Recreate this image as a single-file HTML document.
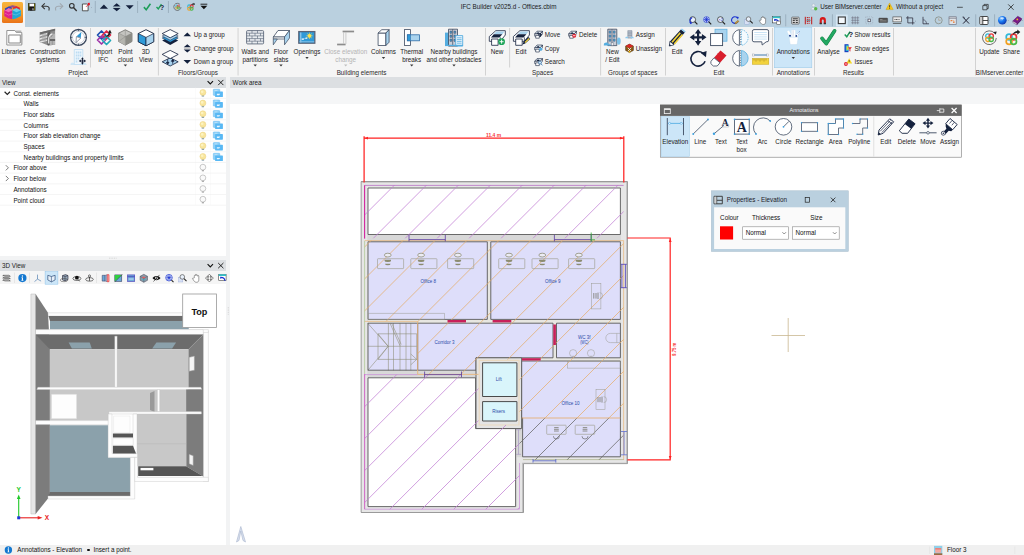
<!DOCTYPE html>
<html><head><meta charset="utf-8"><title>IFC Builder v2025.d - Offices.cbim</title>
<style>
html,body{margin:0;padding:0;}
body{width:1024px;height:555px;overflow:hidden;position:relative;background:#fff;font-family:"Liberation Sans",sans-serif;font-size:6.3px;color:#222;line-height:1;}
.a{position:absolute;}
.t{position:absolute;white-space:nowrap;}
.c{position:absolute;white-space:nowrap;text-align:center;transform:translateX(-50%);}
svg{position:absolute;overflow:visible;}
#title{left:0;top:0;width:1024px;height:26.5px;background:#bad0df;}
#ribbon{left:0;top:26.5px;width:1024px;height:50.5px;background:#f5f5f5;}
.sep{position:absolute;width:1px;background:#d0d0d0;top:28px;height:47px;}
.gl{position:absolute;top:70.4px;white-space:nowrap;transform:translateX(-50%);color:#2a2a2a;}
.dis{color:#b4b4b4;}
.hdr{position:absolute;background:#dcdfe2;height:11px;}
.hdr span{position:absolute;top:2.2px;}
.row{position:absolute;left:0;width:226px;height:10.67px;border-bottom:0.5px solid #ececec;box-sizing:border-box;}
.row span{position:absolute;top:2.4px;color:#111;}
</style></head><body>

<!-- title bar -->
<div id="title" class="a"></div>
<div class="a" style="left:0;top:0;width:24.7px;height:26.5px;background:#f5f5f5;"></div>
<div class="a" style="left:1.6px;top:1.9px;width:21.3px;height:21.2px;border-radius:1.5px;background:linear-gradient(#f8b53c,#f29a2a 55%,#ea7318);"></div>
<svg class="a" style="left:0;top:0;" width="1024" height="27" viewBox="0 0 1024 27">
<g transform="translate(0 0) scale(1)"><path d="M4.300 10.200l4.300-2.100 3.800 2.100v9.100l-4.300-1-3.800-2.200z" fill="#e0208c"/><path d="M12.400 10.200l4.200-2.100 4.300 2.100v5.900l-4.800 2.400-3.700.8z" fill="#20a8d8"/><path d="M4.300 10.200l4.300-2.100 3.800 2.100-3.900 2z" fill="#f268b4"/><path d="M12.400 10.200l4.200-2.100 4.300 2.100-4.400 2z" fill="#6cd0ee"/><path d="M4.800 8.600l4.300-2.400 2.700 1.300v1.600L8.600 8.100l-3.200 2.100z" fill="#3048b8"/><path d="M12.900 7.500l3.200-1.600 3.800 1.800v2l-3.300-1.600-3.700 1z" fill="#e02838"/><path d="M9.100 6.200l3.300-1 3.700.7-3.200 1.600-1.100.0z" fill="#7838a8" opacity="0.800"/><path d="M5 13.200l3.500 1.900 3.900-1.500M12.400 14l3.700 1 4.200-2" fill="none" stroke="#fff" stroke-width="0.500" opacity="0.450"/></g>
<g transform="translate(28 3.2) scale(1)"><path d="M0 0h7.400v7.400H0z" fill="#111"/><path d="M1.300.4h4.800v2.800H1.300z" fill="#fff"/><path d="M.4.400h.9v6.600H.4zM6.100.4H7v6.600h-.9z" fill="#6b6b10"/><path d="M1.800 4.600h3.800v2.800H1.800z" fill="#222"/><path d="M4.600 5h.8v2h-.8z" fill="#fff"/></g>
<g transform="translate(41.5 3) scale(1)"><path d="M3.300.3L.4 3.200l2.900 2.900" fill="none" stroke="#333" stroke-width="1.100"/><path d="M.8 3.200h4.200c2.500 0 3.300 2 2.300 4.300" fill="none" stroke="#333" stroke-width="1.100"/></g>
<g transform="translate(55 3) scale(1)"><path d="M4.900.3l2.900 2.900-2.900 2.900" fill="none" stroke="#a0a8b0" stroke-width="1.100"/><path d="M7.400 3.200H3.200C.7 3.200-.1 5.200.9 7.500" fill="none" stroke="#a0a8b0" stroke-width="1.100"/></g>
<g transform="translate(68.8 2.8) scale(1)"><circle cx="3" cy="3" r="2.300" fill="none" stroke="#333" stroke-width="1.100"/><path d="M4.700 4.700l3.200 3.500" stroke="#333" stroke-width="1.300"/></g>
<g transform="translate(82 2.6) scale(1)"><path d="M.4 1.400h4.300l1.400 1.400v5.400H.4z" fill="#fff" stroke="#333" stroke-width="0.800"/><path d="M5.500.3l2.200-.1.200 2.300-1.600.6z" fill="#e81020"/><path d="M5.700 2.500L4 4.300" stroke="#e81020" stroke-width="0.700"/></g>
<circle cx="91.700" cy="7.500" r="0.300" fill="#556"/>
<rect x="94.85000000000001" y="1" width="0.700" height="12" fill="#8fa3b3"/>
<rect x="137.35" y="1" width="0.700" height="12" fill="#8fa3b3"/>
<rect x="167.95000000000002" y="1" width="0.700" height="12" fill="#8fa3b3"/>
<path d="M99.800 8.700l4.100-4.100 4.100 4.100z" fill="#14213d"/>
<path d="M112.800 6.400l3.900-3.200 3.900 3.200zM112.800 8l3.900 3.200 3.900-3.200z" fill="#14213d"/><path d="M113 7.200h7.400" stroke="#9aa" stroke-width="0.500"/>
<path d="M125.700 5.200l4 4 4-4z" fill="#14213d"/>
<g transform="translate(143 3) scale(1)"><path d="M.3 4.800l1.200-1.200 1.600 1.800L6.800.2l1.300 1L3.300 8z" fill="#1e9e5a"/></g>
<g transform="translate(155.7 3.6) scale(1)"><path d="M.3 3.800l1-1 1.200 1.400L5.200.2l1.100.8L2.700 6.500z" fill="#1e9e5a"/><text x="4.300" y="6.600" font-family="Liberation Sans, sans-serif" font-weight="bold" font-size="6.800" fill="#14213d">?</text></g>
<g transform="translate(173.6 3) scale(1)"><path d="M6.500 1.500A3.600 3.600 0 1 0 7.400 4" fill="none" stroke="#444" stroke-width="0.600"/><g fill="none" stroke-width="0.900"><circle cx="3.200" cy="3.200" r="1.100" stroke="#30b8d8"/><circle cx="4.800" cy="3.200" r="1.100" stroke="#e83838"/><circle cx="3.200" cy="4.800" r="1.100" stroke="#f0a020"/><circle cx="4.800" cy="4.800" r="1.100" stroke="#48b848"/></g></g>
<g transform="translate(186.6 2.6) scale(1)"><g fill="none" stroke-width="1.100"><circle cx="2.600" cy="3.800" r="1.500" stroke="#30b8d8"/><circle cx="5" cy="3.800" r="1.500" stroke="#e83838"/><circle cx="2.600" cy="6.200" r="1.500" stroke="#f0a020"/><circle cx="5" cy="6.200" r="1.500" stroke="#48b848"/></g><path d="M4.500 2.800C5 1.300 6 1 7 1V.2l1.500 1.300L7 2.800V2c-.8 0-1.600.1-2.500.8z" fill="#222"/></g>
<path d="M200.500 4.200h6.800" stroke="#111" stroke-width="0.900"/><path d="M200.500 5.800l3.400 3.400 3.400-3.400z" fill="#111"/>
<g transform="translate(810.7 3.3) scale(1)"><circle cx="2.800" cy="2" r="1.500" fill="#e8eef4" stroke="#98a8b8" stroke-width="0.400"/><path d="M.3 6.500c0-3 5-3 5 0z" fill="#e8eef4" stroke="#98a8b8" stroke-width="0.400"/><circle cx="5" cy="5.400" r="1.700" fill="#58b848"/></g>
<g transform="translate(885.8 2.6) scale(1)"><path d="M3.800.3l3.600 6.700H.2z" fill="#f8c818" stroke="#c89808" stroke-width="0.400" stroke-linejoin="round"/><path d="M3.800 2.600v2.300M3.800 5.600v.7" stroke="#222" stroke-width="0.800"/></g>
<path d="M957 7.300h5.800" stroke="#222" stroke-width="0.700"/>
<path d="M982.800 5.600h4.200v4.200h-4.200zM984 5.600V4.400h4.200v4.200H987" fill="none" stroke="#222" stroke-width="0.700"/>
<path d="M1008.200 4.400l5.400 5.400M1013.600 4.400l-5.400 5.400" stroke="#222" stroke-width="0.800"/>
<g transform="translate(689.2 16.1) scale(1)"><circle cx="3.500" cy="3.500" r="2.900" fill="#e8f0fa" stroke="#222" stroke-width="0.700"/><path d="M1.500 7.500C.2 5.500.5 2.500 3 1.300" fill="none" stroke="#1830d0" stroke-width="1.100"/><path d="M.3 6l1.400 2.200L3.300 6.300z" fill="#1830d0"/><path d="M5.600 5.600l2.600 2.600" stroke="#222" stroke-width="1.200"/></g>
<g transform="translate(703 16.1) scale(1)"><circle cx="3.500" cy="3.500" r="2.900" fill="#e8f0fa" stroke="#1830d0" stroke-width="0.700"/><path d="M3.500 1v5M1 3.500h5M1.700 1.700l3.600 3.600M5.300 1.700L1.700 5.300" stroke="#1830d0" stroke-width="0.800"/><path d="M5.600 5.600l2.600 2.600" stroke="#222" stroke-width="1.200"/></g>
<g transform="translate(716.9 16.1) scale(1)"><circle cx="3.500" cy="3.500" r="2.900" fill="#e8f0fa" stroke="#222" stroke-width="0.700"/><text x="1.700" y="5" font-family="Liberation Sans, sans-serif" font-size="3.600" fill="#1830d0">×2</text><path d="M5.600 5.600l2.600 2.600" stroke="#222" stroke-width="1.200"/></g>
<g transform="translate(730.7 16.1) scale(1)"><path d="M6.800 2A3.300 3.300 0 1 0 7.200 5.200" fill="none" stroke="#1830d0" stroke-width="1.100"/><path d="M5.500.3l2.600.5-.9 2.500z" fill="#1830d0"/><path d="M4.500 6.500l2.800-2.300 1 1.100-2.800 2.300-1.400.3z" fill="#c89838" stroke="#6a4a10" stroke-width="0.300"/></g>
<g transform="translate(744.5 16.1) scale(1)"><rect x="0.300" y="3.500" width="4.200" height="4.600" fill="#d8e0f4" stroke="#98a8d8" stroke-width="0.400"/><circle cx="4" cy="3" r="2.300" fill="#e8f0fa" stroke="#555" stroke-width="0.700"/><path d="M5.700 4.700l2.500 2.600" stroke="#222" stroke-width="1.100"/></g>
<g transform="translate(758.8 16.1) scale(1)"><path d="M2.300 4V1.800a.6.600 0 0 1 1.100 0V1a.6.600 0 0 1 1.200 0v.5a.6.600 0 0 1 1.100 0v.8a.55.55 0 0 1 1.100 0V6c0 1.500-.8 2.400-2.300 2.400S2.300 7.500 1.500 6.300L.6 4.800c-.3-.6.500-1 .9-.5z" fill="#fff" stroke="#444" stroke-width="0.500"/></g>
<g transform="translate(772.3 16.1) scale(1)"><rect x="0.400" y="0.400" width="7.400" height="6.400" fill="#fff" stroke="#444" stroke-width="0.600"/><rect x="0.400" y="0.400" width="7.400" height="1.700" fill="#30c0c8"/><path d="M2.500 3.500c2.500 0 4 1 4.200 3.500" fill="none" stroke="#1830d0" stroke-width="1.100"/><path d="M2 2.600l-.3 2.200 2-.6z" fill="#1830d0"/><rect x="4.500" y="5" width="3.600" height="3.200" fill="#fff" stroke="#444" stroke-width="0.500"/></g>
<rect x="785.4499999999999" y="14.300" width="0.700" height="12" fill="#8fa3b3"/>
<rect x="831.9499999999999" y="14.300" width="0.700" height="12" fill="#8fa3b3"/>
<rect x="975.4499999999999" y="14.300" width="0.700" height="12" fill="#8fa3b3"/>
<rect x="994.35" y="14.300" width="0.700" height="12" fill="#8fa3b3"/>
<g transform="translate(791.3 16.3) scale(1)"><rect x="0.300" y="0.800" width="7.600" height="7" rx="0.800" fill="#d8d8d8" stroke="#444" stroke-width="0.600"/><path d="M1.500 2.500h5M1.500 4.300h2M4.500 4.300h2M1.500 6.200h2M4.500 6.200h2" stroke="#222" stroke-width="0.900"/></g>
<g transform="translate(804.5 16.3) scale(1)"><path d="M.8.500v7.500M7.200.500v7.500" stroke="#c01818" stroke-width="1"/><path d="M2.300 1.200h3.400M2.300 3h3.400M2.300 5.200h3.400M2.300 7h3.400" stroke="#c01818" stroke-width="0.900" stroke-dasharray="1.200 0.500"/><path d="M2 4.100h4" stroke="#333" stroke-width="0.500"/></g>
<g transform="translate(818.8 16.5) scale(1)"><path d="M.9 7.500V3.700a3.100 3.100 0 0 1 6.200 0V7.500H5V3.900a1 1 0 0 0-2 0V7.500z" fill="#d81818"/><path d="M.9 6.300h2.100v1.400H.9zM5 6.300h2.100v1.400H5z" fill="#333"/></g>
<rect x="836" y="14.600" width="11.700" height="11.700" fill="#d4e6f4"/>
<rect x="838.300" y="17.0" width="7" height="6.600" fill="#f4f8fc" stroke="#333" stroke-width="1.100"/>
<g transform="translate(851.2 16.3) scale(1)"><path d="M0 1.500h8M0 4h8M0 6.500h8M1.500 0v8M4 0v8M6.500 0v8" stroke="#667" stroke-width="0.550"/></g>
<g transform="translate(865.2 16.3) scale(1)"><rect x="2.800" y="2.800" width="2.600" height="2.600" fill="#fff" stroke="#445" stroke-width="0.700"/><path d="M.5.500h7v7h-7z" fill="none" stroke="#889" stroke-width="0.500" stroke-dasharray="0.600 1.200"/></g>
<g transform="translate(878.5 17.3) scale(1)"><rect x="0.300" y="0.800" width="8.800" height="4.400" rx="0.600" fill="#555" stroke="#333" stroke-width="0.400"/><path d="M1.500 2.200h2.500M1.500 3.600h6.500" stroke="#aaa" stroke-width="0.600"/></g>
<g transform="translate(892.5 16.3) scale(1)"><rect x="0.400" y="0.600" width="8.400" height="5" fill="#e8e8e8" stroke="#444" stroke-width="0.600"/><path d="M2 3.200h5" stroke="#555" stroke-width="1.100" stroke-dasharray="1 0.500"/><path d="M.4 7.200h8.400" stroke="#444" stroke-width="0.700"/></g>
<g transform="translate(906 16.1) scale(1)"><path d="M1.800 0v6.800h6.700M0 1.800h6.700v6.700" fill="none" stroke="#334" stroke-width="0.800"/><circle cx="9.300" cy="5" r="0.300" fill="#334"/></g>
<g transform="translate(921 16.3) scale(1)"><path d="M2 .5v7h6" fill="none" stroke="#334" stroke-width="0.800"/><path d="M2 3.500c2 0 3.500 1.500 3.500 4" fill="none" stroke="#334" stroke-width="0.600"/></g>
<g transform="translate(934.7 16.3) scale(1)"><circle cx="4" cy="4" r="3.500" fill="none" stroke="#776" stroke-width="0.600"/><path d="M4 4V2M4 4h2" stroke="#a86" stroke-width="0.500"/></g>
<g transform="translate(948.6 16.0) scale(1)"><rect x="0.400" y="0.800" width="7.200" height="7.600" fill="#dfe4e8" stroke="#667" stroke-width="0.600"/><path d="M.4 2.200h7.200" stroke="#667" stroke-width="0.700"/><path d="M2 4h1.300v1.300H2zM4.600 5.600h1.300v1.300H4.600z" fill="#e87830"/><path d="M3.300 4.600h2v1" fill="none" stroke="#e87830" stroke-width="0.400"/></g>
<g transform="translate(962.1 16.3) scale(1)"><path d="M1 1l6 6.300M7.200.8L1 7.300" stroke="#223" stroke-width="1"/><path d="M.5.500l1.500.3.300 1.500" fill="none" stroke="#223" stroke-width="0.600"/></g>
<g transform="translate(979.4 16.1) scale(1)"><rect x="0.400" y="0.400" width="8.200" height="8" rx="0.800" fill="#fff" stroke="#333" stroke-width="0.900"/><rect x="0.800" y="0.800" width="2.400" height="7.200" fill="#ccc"/><path d="M3.400.4v8M3.400 4.400h5.200" stroke="#333" stroke-width="0.900"/></g>
<circle cx="989.600" cy="20.300" r="0.250" fill="#333"/>
<defs><radialGradient id="gl" cx="0.350" cy="0.300" r="0.800"><stop offset="0" stop-color="#8fc8ff"/><stop offset="0.450" stop-color="#1878f0"/><stop offset="1" stop-color="#0a2aa0"/></radialGradient></defs>
<circle cx="1002.300" cy="20.3" r="4.300" fill="url(#gl)"/><path d="M1000 18c1.500-1 3.500-.8 4.500.5-.8 0-1.500.5-1.800 1.300-.8-.8-2-.9-2.700-1.800z" fill="#e8f4ff" opacity="0.800"/>
<circle cx="1008.200" cy="20.300" r="0.250" fill="#333"/>
<g transform="translate(1012.5 15.8) scale(1)"><path d="M.3 5.300L5.200.4l4 2.400-4.800 5z" fill="#7a1888" stroke="#4a0858" stroke-width="0.400" stroke-linejoin="round"/><path d="M.3 5.300l4.100 2.500v1.300L.3 6.600z" fill="#eee" stroke="#4a0858" stroke-width="0.400"/><path d="M4.400 7.800l4.800-5v1.300l-4.800 5z" fill="#5a1068"/><circle cx="4.800" cy="3.600" r="0.900" fill="#f0c020"/></g>
<circle cx="1022.600" cy="20.300" r="0.250" fill="#333"/>
</svg>
<div class="c" style="left:508.600px;top:3.900px;color:#1a1a1a;">IFC Builder v2025.d - Offices.cbim</div>
<div class="t" style="left:820.300px;top:3.900px;color:#1a1a1a;letter-spacing:-0.070px;">User BIMserver.center</div>
<div class="t" style="left:895.900px;top:3.900px;color:#1a1a1a;">Without a project</div>
<!-- ribbon -->
<div id="ribbon" class="a"></div>
<svg class="a" style="left:0;top:0;" width="1024" height="78" viewBox="0 0 1024 78">
<rect x="157.9" y="28" width="0.9" height="47.5" fill="#cfcfcf"/>
<rect x="237.6" y="28" width="0.9" height="47.5" fill="#cfcfcf"/>
<rect x="485.0" y="28" width="0.9" height="47.5" fill="#cfcfcf"/>
<rect x="600.2" y="28" width="0.9" height="47.5" fill="#cfcfcf"/>
<rect x="665.0" y="28" width="0.9" height="47.5" fill="#cfcfcf"/>
<rect x="772.0" y="28" width="0.9" height="47.5" fill="#cfcfcf"/>
<rect x="814.1" y="28" width="0.9" height="47.5" fill="#cfcfcf"/>
<rect x="893.0" y="28" width="0.9" height="47.5" fill="#cfcfcf"/>
<rect x="975.0" y="28" width="0.9" height="47.5" fill="#cfcfcf"/>
<rect x="90.1" y="28" width="0.9" height="39.5" fill="#cfcfcf"/>
<rect x="509.20000000000005" y="28" width="0.9" height="39.5" fill="#cfcfcf"/>
<rect x="774.4" y="27.5" width="37.4" height="40.2" fill="#cce6f8" stroke="#9fcbea" stroke-width="0.6"/>
<g transform="translate(5.8 29) scale(1)"><path d="M1 1.5h8l1.5 2h5.5v12.5H1z" fill="#fff" stroke="#8a8a8a" stroke-width="0.9"/><path d="M9.5 1.5h6v2h-5z" fill="#b5b5b5"/><path d="M3 6h11.5v8H3z" fill="#fff" stroke="#7a7a7a" stroke-width="0.9"/><path d="M14.5 6l1.5-1v10" fill="none" stroke="#aaa" stroke-width="0.8"/></g>
<g transform="translate(39 29) scale(1)"><path d="M.6 3.400L16.100-.2v15.900l-6.850.7L.6 13.100z" fill="#8e8e8e"/><path d="M.6 3.400L16.100-.2v1.600L1.800 5.200z" fill="#6a6a6a"/><path d="M.3 6.200l8.200-2.500v1.500L.3 7.800zM.3 9.300l8.200-2.300v1.500L.3 10.900zM.8 12.200l7.700-2v1.500l-6.500 1.800z" fill="#e4e4e4"/><path d="M3 5l4-1.200v8.700l-4-1z" fill="#a8a8a8" opacity="0.550"/><path d="M8.500 3.500l2.800-.8v13l-2.050.7-0.750-.3z" fill="#5c5c5c"/><path d="M10.700 4.800h5.400v10.900l-5.400.6z" fill="#b4b4b4"/><path d="M10.700 10.200h5.400v1.600h-5.400z" fill="#555"/><path d="M13.300 11.800v4.200" stroke="#888" stroke-width="0.600"/><path d="M9.700 14.500V10c0-2.500 1.300-4.500 3.600-5.300" fill="none" stroke="#f4f4f4" stroke-width="1.100"/><path d="M11.800 8.200l2-2.600" stroke="#666" stroke-width="0.500"/></g>
<g transform="translate(69.8 28.6) scale(1)"><circle cx="8.7" cy="8.8" r="7.9" fill="#fff" stroke="#3c4a60" stroke-width="1.3"/><circle cx="8.7" cy="8.8" r="6" fill="none" stroke="#9aa4b4" stroke-width="0.5"/><path d="M11.5 3.5L11 9.5 6.6 8z" fill="#2f9ad8"/><path d="M6.6 8L11 9.5 6.2 14z" fill="#fff" stroke="#6a7486" stroke-width="0.7"/><path d="M8.7 1v1.6M8.7 15v1.6M1 8.8h1.6M14.8 8.8h1.6" stroke="#3c4a60" stroke-width="0.8"/></g>
<g transform="translate(69.8 49) scale(1)"><path d="M4.5 0.5h8.5v15H4.5z" fill="#eef6fc" stroke="#bcdcf2" stroke-width="0.8"/><path d="M6 2.5h1.5v2H6zM8 2.5h1.5v2H8zM10 2.5h1.5v2H10zM6 5.5h1.5v2H6zM8 5.5h1.5v2H8zM10 5.5h1.5v2H10zM6 8.5h1.5v2H6zM8 8.5h1.5v2H8zM6 11.5h1.5v2H6z" fill="#bcdcf2"/><path d="M1 15.5c0-2 3-2 3.5 0zM11 15.5c0-2.4 5-2.4 5.5 0z" fill="#d4eaf8" stroke="#bcdcf2" stroke-width="0.5"/><g transform="translate(9 8.300) scale(0.440)"><path d="M8.300 0l3.200 4.600H9.400v2.700h2.700V5.100l4.600 3.200-4.600 3.200V9.400H9.400v2.700h2.100l-3.200 4.600-3.200-4.600h2.100V9.400H4.500v2.100L-.1 8.300l4.600-3.200v2.200h2.700V4.600H5.100z" fill="#1a2238"/></g></g>
<g transform="translate(95.5 29) scale(1)"><g fill="none" stroke-width="1.7" stroke-linejoin="round"><path d="M2 6l4-4 4 4-4 4z" stroke="#1d4fb0"/><path d="M7 6l4-4 4 4-4 4z" stroke="#e0284a"/><path d="M2 11l4-4 4 4-4 4z" stroke="#a035a8"/><path d="M7 11.5l4-4 4 4-4 4z" stroke="#20a8b8"/></g><path d="M9 6.500c2 1 4-1 4.500-3l-1.200.2L14.500.8l1.800 3.600-1.200-.3C14.500 7.500 11 9 9 6.500z" fill="#222"/></g>
<g transform="translate(118 29) scale(1)"><path d="M7.300.8l6.700 3.300v8.400l-6.700 3.700-6.700-3.700V4.100z" fill="#c4c4c0" stroke="#70706c" stroke-width="0.8"/><path d="M7.300 7.600v8.600l6.700-3.700V4.100z" fill="#8c8c86"/><path d="M.6 4.100l6.700 3.500v8.600L.6 12.500z" fill="#b4b4ae"/><path d="M.6 4.100l6.700 3.500 6.700-3.500M7.300 7.600v8.600M7.300.8v6.800M.6 12.500l6.700-4.900 6.700 4.900" fill="none" stroke="#8a8a86" stroke-width="0.5"/></g>
<g transform="translate(137.5 29) scale(1)"><path d="M8.500.7l7.700 3.800v8.300l-7.700 4-7.700-4V4.500z" fill="#fff" stroke="#14213d" stroke-width="0.9" stroke-linejoin="round"/><path d="M.8 4.500l7.700 3.900v8.400l-7.700-4z" fill="#2f9ad8" stroke="#14213d" stroke-width="0.7"/><path d="M16.200 4.500l-7.700 3.900v8.400l7.700-4z" fill="#a9d3ee" stroke="#14213d" stroke-width="0.7"/></g>
<g transform="translate(161.7 29) scale(1)"><path d="M8.500 7.500l8 4-8 4.500-8-4.500z" fill="#14213d"/><path d="M8.500 5l8 4-8 4.300-8-4.300z" fill="#2f9ad8" stroke="#14213d" stroke-width="0.5"/><path d="M8.500 3l8 4-8 4.200-8-4.200z" fill="#a9d3ee" stroke="#14213d" stroke-width="0.5"/><path d="M8.500.6l8 4-8 4.200-8-4.200z" fill="#fff" stroke="#14213d" stroke-width="0.8" stroke-linejoin="round"/></g>
<g transform="translate(161.7 49.8) scale(1)"><path d="M8.500 8l8 4-8 4.200-8-4.200z" fill="#a9d3ee" stroke="#14213d" stroke-width="0.8" stroke-linejoin="round"/><path d="M8.500.6l8 4-8 4.200-8-4.200z" fill="#fff" stroke="#14213d" stroke-width="0.8" stroke-linejoin="round"/><path d="M6 9.500v3.500M6 14.500l-1.300-2h2.600zM11 14v-3.500M11 9.500l-1.300 2h2.600z" stroke="#14213d" stroke-width="0.8" fill="#14213d"/></g>
<path d="M183.500 36.300l3.800-3.800 3.800 3.800z" fill="#14213d"/>
<path d="M183.700 47.200l3.600-3 3.600 3zM183.700 49.400l3.600 3 3.600-3z" fill="#14213d"/><path d="M184 48.300h6.600" stroke="#999" stroke-width="0.6"/>
<path d="M183.500 60l3.800 3.800 3.800-3.800z" fill="#14213d"/>
<g transform="translate(246 30) scale(1)"><rect x="0.6" y="0.6" width="17" height="13.300" rx="1" fill="#fff" stroke="#4a5568" stroke-width="0.8"/><path d="M.6 3.2h17" stroke="#4a5568" stroke-width="0.6"/><path d="M.6 5.9h17" stroke="#4a5568" stroke-width="0.6"/><path d="M.6 8.6h17" stroke="#4a5568" stroke-width="0.6"/><path d="M.6 11.2h17" stroke="#4a5568" stroke-width="0.6"/><path d="M6 0.6v2.6" stroke="#4a5568" stroke-width="0.6"/><path d="M11.5 0.6v2.6" stroke="#4a5568" stroke-width="0.6"/><path d="M3.5 3.2v2.6" stroke="#4a5568" stroke-width="0.6"/><path d="M9 3.2v2.6" stroke="#4a5568" stroke-width="0.6"/><path d="M14.5 3.2v2.6" stroke="#4a5568" stroke-width="0.6"/><path d="M6 5.9v2.6" stroke="#4a5568" stroke-width="0.6"/><path d="M11.5 5.9v2.6" stroke="#4a5568" stroke-width="0.6"/><path d="M3.5 8.6v2.6" stroke="#4a5568" stroke-width="0.6"/><path d="M9 8.6v2.6" stroke="#4a5568" stroke-width="0.6"/><path d="M14.5 8.6v2.6" stroke="#4a5568" stroke-width="0.6"/><path d="M6 11.2v2.6" stroke="#4a5568" stroke-width="0.6"/><path d="M11.5 11.2v2.6" stroke="#4a5568" stroke-width="0.6"/><rect x="0.6" y="0.6" width="17" height="13.300" fill="#8090a8" opacity="0.18"/></g>
<g transform="translate(272.5 29.5) scale(1)"><path d="M5.500 1h11.500l-5 6.500H.8z" fill="#fff" stroke="#3c4a60" stroke-width="0.8" stroke-linejoin="round"/><path d="M.8 7.500h11.200v2H.8z" fill="#fff" stroke="#3c4a60" stroke-width="0.7"/><path d="M17 1v7.500l-5 6.800V7.500z" fill="#a9d3ee" stroke="#3c4a60" stroke-width="0.7" stroke-linejoin="round"/><path d="M.8 9.500l4 .1-4 5.700z" fill="#a9d3ee" stroke="#3c4a60" stroke-width="0.7" stroke-linejoin="round"/></g>
<g transform="translate(298.2 31) scale(1)"><rect x="0.6" y="0.6" width="16" height="11.600" fill="#2f9ad8" stroke="#5a6478" stroke-width="1.3"/><path d="M2.600 1.500v10" stroke="#cfe4f4" stroke-width="0.8"/><path d="M3.500 7.500h3.500l.5-1h1.500v1.200H6l-.5 1h-2z" fill="#fff"/><circle cx="11.300" cy="4.800" r="1.900" fill="#ffe14a"/><path d="M11.300 1.600v6.400M8.100 4.800h6.400M9 2.500l4.600 4.600M13.600 2.500L9 7.100" stroke="#ffe14a" stroke-width="0.6"/><path d="M1.200 10.800h14.800" stroke="#8fc4e8" stroke-width="0.9"/></g>
<g transform="translate(336.6 30) scale(1)"><path d="M6 1.500h11.500" stroke="#8c8c8c" stroke-width="1.700"/><path d="M.5 14.500H9" stroke="#8c8c8c" stroke-width="1.700"/><path d="M7 2v12M9.300 2v12" stroke="#c2c2c2" stroke-width="0.8"/></g>
<g transform="translate(377.3 29) scale(1)"><path d="M.8 4h7.800v12.500H.8z" fill="#fff" stroke="#3c4a60" stroke-width="0.8"/><path d="M.8 4L4.500.7h7.300L8.600 4z" fill="#fff" stroke="#3c4a60" stroke-width="0.8" stroke-linejoin="round"/><path d="M8.600 4L11.800.7v12.500l-3.200 3.300z" fill="#a9d3ee" stroke="#3c4a60" stroke-width="0.8" stroke-linejoin="round"/></g>
<g transform="translate(403.9 29) scale(1)"><rect x="0.6" y="0.6" width="6" height="15.800" fill="#fff" stroke="#3c4a60" stroke-width="0.8"/><rect x="3.400" y="5.800" width="12.300" height="6" fill="#a9d3ee" stroke="#2d6da8" stroke-width="0.8"/><rect x="3.400" y="5.800" width="3.200" height="6" fill="#2f9ad8" stroke="#2d6da8" stroke-width="0.6"/></g>
<g transform="translate(445 28.6) scale(1)"><path d="M0 4h5v13.500H0z" fill="#56aee0"/><path d="M3.500.6h9v16.900h-9z" fill="#c9ced8" stroke="#3c4a60" stroke-width="0.8"/><path d="M7.700.6v16.900" stroke="#3c4a60" stroke-width="0.7"/><path d="M5 2.500h1.700v2.200H5zM9 2.500h1.700v2.200H9zM5 6.500h1.700v2.200H5zM9 6.500h1.700v2.200H9zM5 10.500h1.700v2.200H5zM9 10.500h1.700v2.200H9z" fill="#56aee0" stroke="#2a3a58" stroke-width="0.5"/><path d="M10.700 7h7v10.500h-7z" fill="#eaf4fc" stroke="#56aee0" stroke-width="0.9"/><path d="M12 9.200h4.600M12 11h4.600M12 12.800h4.600M12 14.600h4.600" stroke="#56aee0" stroke-width="0.8"/><path d="M0 16.800h18" stroke="#56aee0" stroke-width="1.2"/></g>
<g transform="translate(488.3 29.5) scale(1)"><path d="M7.500 1.200H17v4.300l-5 6.300H1V7z" fill="#fff" stroke="#14213d" stroke-width="0.8" stroke-linejoin="round"/><path d="M7.900 2h8.300l-2.200 2.800H5.500z" fill="#a9d3ee"/><path d="M5.500 4.800h8.500l-2.900 3.200H2.700z" fill="#14213d"/><path d="M12 7.800v4" stroke="#14213d" stroke-width="0.7"/><path d="M3.300 9.500h6.500v6.300H3.300z" fill="#fff" stroke="#14213d" stroke-width="0.8"/></g>
<circle cx="501.600" cy="41.700" r="3.400" fill="#1fa55a"/><path d="M499.600 41.700h4M501.600 39.700v4" stroke="#fff" stroke-width="0.9"/>
<g transform="translate(512.4 29.5) scale(1)"><path d="M7.500 1.200H17v4.300l-5 6.300H1V7z" fill="#fff" stroke="#14213d" stroke-width="0.8" stroke-linejoin="round"/><path d="M7.900 2h8.300l-2.200 2.800H5.500z" fill="#a9d3ee"/><path d="M5.500 4.800h8.500l-2.900 3.200H2.700z" fill="#14213d"/><path d="M12 7.800v4" stroke="#14213d" stroke-width="0.7"/><path d="M3.300 9.500h6.500v6.300H3.300z" fill="#fff" stroke="#14213d" stroke-width="0.8"/></g>
<path d="M522.500 44.500l1-2.800 5-4.600 1.700 1.900-5 4.500z" fill="#14213d"/><path d="M524.600 42l4.300-4 .8.900-4.300 4z" fill="#f2d23c"/>
<g transform="translate(534 30.4) scale(1)"><path d="M3 .8h5.500L6.500 3.500H.7z" fill="#dfe8f0" stroke="#14213d" stroke-width="0.6" stroke-linejoin="round"/><path d="M.7 3.500h5.800v2.300H.7z" fill="#fff" stroke="#14213d" stroke-width="0.6"/><path d="M8.500.8v2.500L6.500 5.800V3.500z" fill="#fff" stroke="#14213d" stroke-width="0.6" stroke-linejoin="round"/><path d="M1.700 5h3.600v2.800H1.700z" fill="#fff" stroke="#14213d" stroke-width="0.6"/><path d="M2.500 3.300l1.500-1.800 2 1.800z" fill="#14213d"/><path d="M6.200 2.200l1 1.100h-.6v.7h.7v-.6l1.100 1-1.100 1v-.6h-.7v.7h.6l-1 1.100-1-1.100h.6v-.7h-.7v.6l-1.100-1 1.100-1v.6h.7v-.7h-.6z" fill="#14213d"/></g>
<g transform="translate(534 44.2) scale(1)"><path d="M3 .8h5.500L6.500 3.500H.7z" fill="#dfe8f0" stroke="#14213d" stroke-width="0.6" stroke-linejoin="round"/><path d="M.7 3.500h5.800v2.300H.7z" fill="#fff" stroke="#14213d" stroke-width="0.6"/><path d="M8.500.8v2.500L6.500 5.800V3.500z" fill="#fff" stroke="#14213d" stroke-width="0.6" stroke-linejoin="round"/><path d="M1.700 5h3.600v2.800H1.700z" fill="#fff" stroke="#14213d" stroke-width="0.6"/><path d="M2.500 3.300l1.500-1.800 2 1.800z" fill="#14213d"/><circle cx="6.800" cy="5" r="1.600" fill="#56aee0"/></g>
<g transform="translate(534 57.8) scale(1)"><path d="M3 .8h5.500L6.500 3.500H.7z" fill="#dfe8f0" stroke="#14213d" stroke-width="0.6" stroke-linejoin="round"/><path d="M.7 3.500h5.800v2.300H.7z" fill="#fff" stroke="#14213d" stroke-width="0.6"/><path d="M8.500.8v2.500L6.500 5.800V3.500z" fill="#fff" stroke="#14213d" stroke-width="0.6" stroke-linejoin="round"/><path d="M1.700 5h3.600v2.800H1.700z" fill="#fff" stroke="#14213d" stroke-width="0.6"/><path d="M2.500 3.300l1.500-1.800 2 1.800z" fill="#14213d"/><circle cx="6" cy="4.800" r="1.500" fill="#cfe6f6" stroke="#2d6da8" stroke-width="0.6"/><path d="M7 6l1.400 1.600" stroke="#2d6da8" stroke-width="0.8"/></g>
<g transform="translate(568 30.4) scale(1)"><path d="M3 .8h5.500L6.500 3.500H.7z" fill="#dfe8f0" stroke="#14213d" stroke-width="0.6" stroke-linejoin="round"/><path d="M.7 3.500h5.800v2.300H.7z" fill="#fff" stroke="#14213d" stroke-width="0.6"/><path d="M8.500.8v2.500L6.500 5.800V3.500z" fill="#fff" stroke="#14213d" stroke-width="0.6" stroke-linejoin="round"/><path d="M1.700 5h3.600v2.800H1.700z" fill="#fff" stroke="#14213d" stroke-width="0.6"/><path d="M2.500 3.300l1.500-1.800 2 1.800z" fill="#14213d"/><circle cx="6.200" cy="5.300" r="2" fill="#e02030"/><path d="M5 5.300h2.400" stroke="#fff" stroke-width="0.8"/></g>
<g transform="translate(603.8 28.6) scale(1)"><path d="M4 .6h9v16.400H4z" fill="#c9ced8" stroke="#3c4a60" stroke-width="0.8"/><path d="M8.200.6v16.400" stroke="#3c4a60" stroke-width="0.6"/><path d="M5.300 2.300h1.800v2.300H5.300zM9.500 2.300h1.800v2.300H9.500zM5.300 6.300h1.800v2.300H5.300zM9.500 6.300h1.800v2.300H9.500zM5.300 10.300h1.800v2.300H5.300zM9.500 10.300h1.800v2.300H9.500z" fill="#56aee0" stroke="#2a3a58" stroke-width="0.4"/><path d="M0 16.300c0-3 4.500-3 5-.5 1-.5 2 0 2 1H0z" fill="#56aee0"/><ellipse cx="15" cy="12.500" rx="1.900" ry="3.700" fill="#7cc2ea"/><path d="M7.500 14h2v3h-2z" fill="#fff" stroke="#3c4a60" stroke-width="0.4"/></g>
<g transform="translate(625.3 30.2) scale(1)"><path d="M2.500.4h4.200v7.500H2.500z" fill="#b8c0cc" stroke="#7a8698" stroke-width="0.5"/><path d="M2.500 2h4.200M2.500 3.600h4.200M2.500 5.200h4.200" stroke="#7a8698" stroke-width="0.5"/><path d="M0 8c0-1.800 2.800-1.800 3 0zM5 8c0-2 3.400-2 3.600 0z" fill="#8ccaf0"/></g>
<g transform="translate(625.3 43.8) scale(1)"><path d="M4.200.3l3.900 2v4.300l-3.900 2.200L.3 6.600V2.300z" fill="#8a5a18" stroke="#3a2a10" stroke-width="0.5"/><path d="M4.200.3l3.900 2-3.900 2-3.900-2z" fill="#d82828"/><path d="M2.500 4l3.400 3.400M5.900 4L2.500 7.400" stroke="#fff" stroke-width="0.8"/><path d="M4.200 6.800l1.200 1.400-1.200.8-1.200-.8z" fill="#f0c020"/></g>
<g transform="translate(668.6 28.8) scale(1)"><path d="M12.300.8l3.900 2.900L5.400 16 .7 17.300l.6-4.700z" fill="#14213d"/><path d="M11 3.500l1.300.9-8.200 9.500-1.300-1zM13.300 5.200l1.200.9-8.200 9.500-1.200-.9z" fill="#f2d23c"/><path d="M1.300 12.600l4.100 3.400-4.700 1.300z" fill="#fff" stroke="#14213d" stroke-width="0.6"/><path d="M.7 17.300l.3-2 1.500 1.300z" fill="#14213d"/><path d="M12.300.8l1-1 3.900 2.900-1 1z" fill="#8ccaf0"/></g>
<g transform="translate(689.8 29) scale(1)"><path d="M8.300 0l3.200 4.600H9.400v2.700h2.700V5.100l4.600 3.200-4.600 3.200V9.400H9.400v2.700h2.100l-3.200 4.600-3.200-4.600h2.100V9.400H4.500v2.100L-.1 8.300l4.600-3.200v2.200h2.700V4.600H5.100z" fill="#14213d"/></g>
<g transform="translate(689.8 49.8) scale(1)"><path d="M15.300 11.500A7.300 7.300 0 1 1 13 3.300" fill="none" stroke="#14213d" stroke-width="1.600"/><path d="M11 3.300l5.800-2-.6 6.200z" fill="#14213d"/></g>
<g transform="translate(710 28.8) scale(1)"><rect x="5" y="0.4" width="12" height="12" fill="#a9d3ee" stroke="#56aee0" stroke-width="0.7"/><rect x="0.6" y="4.800" width="12" height="12" fill="#fff" stroke="#3c4a60" stroke-width="0.9"/></g>
<g transform="translate(710 49.8) scale(1)"><path d="M10.500.8l6 5L10 13l-6-5z" fill="#d81e2c"/><path d="M4 8l6 5-2.800 3.200H3.300L.8 13.800 1 11.500z" fill="#fff" stroke="#3c4a60" stroke-width="0.8" stroke-linejoin="round"/><path d="M7.300 3.500l6 5" stroke="#d81e2c" stroke-width="0.5"/></g>
<g transform="translate(731.4 29) scale(1)"><path d="M8 .6A8 8 0 0 0 8 16.400z" fill="#fff" stroke="#3c4a60" stroke-width="0.8"/><path d="M10 .6A8 8 0 0 1 10 16.400z" fill="#f4fafe" stroke="#56aee0" stroke-width="0.8" stroke-dasharray="1.500 1"/><path d="M9 .3v16.500" stroke="#8a92a0" stroke-width="1.300" stroke-dasharray="1.200 1.200"/></g>
<g transform="translate(731.4 49.8) scale(1)"><path d="M8 .6A8 8 0 0 0 8 16.400z" fill="#fff" stroke="#3c4a60" stroke-width="0.8"/><path d="M10 .6A8 8 0 0 1 10 16.400z" fill="#a9d3ee" stroke="#56aee0" stroke-width="0.8"/><path d="M9 .3v16.500" stroke="#8a92a0" stroke-width="1.300" stroke-dasharray="1.200 1.200"/></g>
<g transform="translate(752 29) scale(1)"><path d="M2 .6h13a1.600 1.600 0 0 1 1.600 1.600v9a1.600 1.600 0 0 1-1.600 1.600h-.8L10.200 16l-.4-3.200H2A1.600 1.600 0 0 1 .4 11.200v-9A1.600 1.600 0 0 1 2 .6z" fill="#fff" stroke="#3c4a60" stroke-width="0.9" stroke-linejoin="round"/><path d="M2.300 3.500h12.500M2.300 5.700h12.500M2.300 7.900h12.500M2.300 10.100h12.500" stroke="#c4e0f4" stroke-width="0.9"/></g>
<g transform="translate(752 53) scale(1)"><path d="M1.200 2h14.600" stroke="#2d6da8" stroke-width="0.9"/><rect x="0.300" y="1" width="2" height="2" fill="#fff" stroke="#8a92a0" stroke-width="0.4"/><rect x="14.700" y="1" width="2" height="2" fill="#fff" stroke="#8a92a0" stroke-width="0.4"/><rect x="0.300" y="5.500" width="16.500" height="5.800" fill="#f2d23c" stroke="#c8a818" stroke-width="0.5"/><path d="M2 5.500v2M4 5.500v3M6 5.500v2M8 5.500v3M10 5.500v2M12 5.500v3M14 5.500v2" stroke="#8a6a10" stroke-width="0.5"/></g>
<g transform="translate(785.8 30) scale(1)"><path d="M5.600 0h4.100v7.500H5.600z" fill="#fff" stroke="#c4dcf0" stroke-width="0.300"/><path d="M7.300 0.300v6.500" stroke="#d4dce8" stroke-width="1.100"/><path d="M1.300 1.600l1.800-1.200 2.600 4.800-1.800 1.400z" fill="#fff"/><path d="M12.600 1.900l1.400 1-3 4.200-1.600-1z" fill="#fff"/><path d="M13.300 1.400l.9.700M12.500 2.500l1 .8M11.700 3.600l1.100.8" stroke="#2a58b0" stroke-width="0.500"/><circle cx="4.200" cy="5.700" r="1" fill="#1e3c88"/><circle cx="10.500" cy="6" r="0.900" fill="#1e3c88"/><path d="M3.300 7.200h9.100l-1 6.600a1 1 0 0 1-1 .7H5.300a1 1 0 0 1-1-.7z" fill="#fff" stroke="#c0d8ee" stroke-width="0.400"/></g>
<g transform="translate(819.8 29) scale(1)"><path d="M2.200 9.300l4.300 5.300L14.800 1.800" fill="none" stroke="#157a42" stroke-width="3.600" stroke-linecap="round" stroke-linejoin="round"/><path d="M2.200 9.300l4.300 5.300L14.800 1.800" fill="none" stroke="#22a862" stroke-width="2.700" stroke-linecap="round" stroke-linejoin="round"/></g>
<g transform="translate(843.9 30.6) scale(1)"><path d="M.3 4.300l1-1 1.500 1.600L5.600.6l1.200.8L3 7.300z" fill="#1e9e5a"/><text x="4.700" y="6.800" font-family="Liberation Sans, sans-serif" font-weight="bold" font-size="7.600" fill="#14213d">?</text></g>
<g transform="translate(843.9 43.8) scale(1)"><rect x="0.600" y="0.400" width="4" height="8" fill="#1840c0"/><rect x="1.800" y="1.500" width="2.800" height="5.600" fill="#30c0d0"/><rect x="2.800" y="2.600" width="1.800" height="3.400" fill="#f0d020"/><path d="M4.200 3.400h3.800L6.500 5.300v2.500l-1-.6V5.300z" fill="#e02030"/></g>
<g transform="translate(843.9 57.6) scale(1)"><path d="M5.300.6l3 5.400h-6z" fill="#f6d828"/><path d="M5.300 2.400v2" stroke="#333" stroke-width="0.7"/><circle cx="2" cy="6.400" r="1.900" fill="#e02030"/><path d="M1.200 5.600l1.600 1.600M2.800 5.600L1.200 7.200" stroke="#fff" stroke-width="0.5"/></g>
<g transform="translate(981.9 30) scale(1)"><path d="M12.800 3.300A6.900 6.900 0 1 0 14.400 8" fill="none" stroke="#333" stroke-width="0.7"/><path d="M11.500 2l3.300-.6-.9 3.300z" fill="#222"/><g fill="none" stroke-width="1.300"><circle cx="6" cy="6" r="2.200" stroke="#30b8d8"/><circle cx="9.300" cy="6" r="2.200" stroke="#e83838"/><circle cx="6" cy="9.300" r="2.200" stroke="#f0a020"/><circle cx="9.300" cy="9.300" r="2.200" stroke="#48b848"/></g></g>
<g transform="translate(1004.3 29.5) scale(1)"><g fill="none" stroke-width="1.700"><circle cx="4.800" cy="7.500" r="2.900" stroke="#30b8d8"/><circle cx="9.300" cy="7.500" r="2.900" stroke="#e83838"/><circle cx="4.800" cy="12" r="2.900" stroke="#f0a020"/><circle cx="9.300" cy="12" r="2.900" stroke="#48b848"/></g><path d="M8.500 5.500c.5-3 2.500-4 4.500-4V0l3 2.600-3 2.600V3.600c-1.500 0-3 .2-4.500 1.900z" fill="#222"/></g>
</svg>
<div class="c " style="left:13.6px;top:49.4px;">Libraries</div>
<div class="c " style="left:47.8px;top:49.4px;">Construction</div>
<div class="c " style="left:47.8px;top:56.9px;">systems</div>
<div class="c " style="left:103.3px;top:49.4px;">Import</div>
<div class="c " style="left:103.3px;top:56.9px;">IFC</div>
<div class="c " style="left:125.4px;top:49.4px;">Point</div>
<div class="c " style="left:125.4px;top:56.9px;">cloud</div>
<div class="c " style="left:145.8px;top:49.4px;">3D</div>
<div class="c " style="left:145.8px;top:56.9px;">View</div>
<div class="c " style="left:255.2px;top:49.4px;">Walls and</div>
<div class="c " style="left:255.2px;top:56.9px;">partitions</div>
<div class="c " style="left:281px;top:49.4px;">Floor</div>
<div class="c " style="left:281px;top:56.9px;">slabs</div>
<div class="c " style="left:307px;top:49.4px;">Openings</div>
<div class="c dis" style="left:345.7px;top:49.4px;">Close elevation</div>
<div class="c dis" style="left:345.7px;top:56.9px;">change</div>
<div class="c " style="left:383.5px;top:49.4px;">Columns</div>
<div class="c " style="left:411.7px;top:49.4px;">Thermal</div>
<div class="c " style="left:411.7px;top:56.9px;">breaks</div>
<div class="c " style="left:454px;top:49.4px;">Nearby buildings</div>
<div class="c " style="left:454px;top:56.9px;">and other obstacles</div>
<div class="c " style="left:497.1px;top:49.4px;">New</div>
<div class="c " style="left:521px;top:49.4px;">Edit</div>
<div class="c " style="left:612.4px;top:49.4px;">New</div>
<div class="c " style="left:612.4px;top:56.9px;">/ Edit</div>
<div class="c " style="left:677.2px;top:49.4px;">Edit</div>
<div class="c " style="left:793.3px;top:49.4px;">Annotations</div>
<div class="c " style="left:828.5px;top:49.4px;">Analyse</div>
<div class="c " style="left:989.4px;top:49.4px;">Update</div>
<div class="c " style="left:1011.5px;top:49.4px;">Share</div>
<div class="t" style="left:193.7px;top:31.9px;">Up a group</div>
<div class="t" style="left:193.7px;top:45.7px;">Change group</div>
<div class="t" style="left:193.7px;top:59.3px;">Down a group</div>
<div class="t" style="left:544.8px;top:31.9px;">Move</div>
<div class="t" style="left:544.8px;top:45.7px;">Copy</div>
<div class="t" style="left:544.8px;top:59.3px;">Search</div>
<div class="t" style="left:579px;top:31.9px;">Delete</div>
<div class="t" style="left:635.8px;top:31.9px;">Assign</div>
<div class="t" style="left:635.8px;top:45.7px;">Unassign</div>
<div class="t" style="left:854.4px;top:31.9px;">Show results</div>
<div class="t" style="left:854.4px;top:45.7px;">Show edges</div>
<div class="t" style="left:854.4px;top:59.3px;">Issues</div>
<div class="gl" style="left:78px;">Project</div>
<div class="gl" style="left:197.9px;">Floors/Groups</div>
<div class="gl" style="left:361.5px;">Building elements</div>
<div class="gl" style="left:542.6px;">Spaces</div>
<div class="gl" style="left:632.7px;">Groups of spaces</div>
<div class="gl" style="left:718.9px;">Edit</div>
<div class="gl" style="left:793.3px;">Annotations</div>
<div class="gl" style="left:853.5px;">Results</div>
<div class="gl" style="left:999.5px;">BIMserver.center</div>
<svg class="a" style="left:0;top:0;" width="1024" height="78" viewBox="0 0 1024 78"><path d="M123.70 64.50h3.400l-1.700 1.900z" fill="#3a3a3a"/><path d="M253.50 64.50h3.400l-1.700 1.900z" fill="#3a3a3a"/><path d="M279.30 64.50h3.400l-1.700 1.900z" fill="#3a3a3a"/><path d="M305.30 57.00h3.400l-1.700 1.900z" fill="#3a3a3a"/><path d="M344.00 64.50h3.400l-1.700 1.900z" fill="#c0c0c0"/><path d="M381.80 57.00h3.400l-1.700 1.900z" fill="#3a3a3a"/><path d="M410.00 64.50h3.400l-1.700 1.900z" fill="#3a3a3a"/><path d="M452.30 64.50h3.400l-1.700 1.900z" fill="#3a3a3a"/><path d="M791.60 57.00h3.400l-1.700 1.900z" fill="#3a3a3a"/></svg>
<!-- panels -->
<div class="a" style="left:0;top:77px;width:1024px;height:478px;background:#f2f3f4;"></div>
<div class="hdr" style="left:0;top:77.4px;width:226.1px;height:10.3px;"><span style="left:2px;">View</span></div>
<div class="hdr" style="left:230.3px;top:77.4px;width:794px;height:10.3px;"><span style="left:2.3px;">Work area</span></div>
<div class="a" id="tree" style="left:0;top:87.7px;width:226.1px;height:168.5px;background:#fff;"></div>
<div class="a" style="left:230.3px;top:87.7px;width:794px;height:16.1px;background:#f5f6f7;"></div>
<div class="a" id="canvas" style="left:230.3px;top:103.8px;width:794px;height:441.2px;background:#fff;"></div>
<div class="hdr" style="left:0;top:260.3px;width:226.1px;height:10.8px;"><span style="left:2px;top:2.4px;">3D View</span></div>
<div class="a" style="left:0;top:271.1px;width:226.1px;height:13.3px;background:#f5f5f5;"></div>
<div class="a" id="v3d" style="left:0;top:284.4px;width:226.1px;height:260.6px;background:#fff;"></div>
<svg class="a" style="left:0;top:0;" width="232" height="290" viewBox="0 0 232 290">
<path d="M195.400 87.700v117M210.400 87.700v117" stroke="#f4f4f4" stroke-width="0.500"/>
<path d="M0 98.38h226" stroke="#eeeeee" stroke-width="0.600"/>
<path d="M4.600 91.74l2.700 2.700 2.700-2.700" fill="none" stroke="#222" stroke-width="1.150"/>
<path d="M201.70000000000002 94.70h2.400v1.900h-2.400z" fill="#8aa0ac"/><circle cx="202.9" cy="92.40" r="3" fill="#f8e59c" stroke="#ead080" stroke-width="0.500"/><circle cx="202.20000000000002" cy="91.70" r="1.300" fill="#fdf3c0"/>
<rect x="213.3" y="89.20" width="6.500" height="6.200" rx="0.600" fill="#8ed0f7" stroke="#4aaef0" stroke-width="0.400"/><rect x="215.10000000000002" y="91.40" width="7.800" height="5.600" rx="0.600" fill="#58b8f4"/><path d="M216.9 93.80h3.400l-1.200 1.400h-2.200z" fill="#eaf6fe"/><path d="M214.5 90.50h3" stroke="#c8e8fb" stroke-width="0.700"/>
<path d="M0 109.06h226" stroke="#eeeeee" stroke-width="0.600"/>
<path d="M201.70000000000002 105.38h2.400v1.900h-2.400z" fill="#8aa0ac"/><circle cx="202.9" cy="103.08" r="3" fill="#f8e59c" stroke="#ead080" stroke-width="0.500"/><circle cx="202.20000000000002" cy="102.38" r="1.300" fill="#fdf3c0"/>
<rect x="213.3" y="99.88" width="6.500" height="6.200" rx="0.600" fill="#8ed0f7" stroke="#4aaef0" stroke-width="0.400"/><rect x="215.10000000000002" y="102.08" width="7.800" height="5.600" rx="0.600" fill="#58b8f4"/><path d="M216.9 104.48h3.400l-1.200 1.400h-2.200z" fill="#eaf6fe"/><path d="M214.5 101.18h3" stroke="#c8e8fb" stroke-width="0.700"/>
<path d="M0 119.74h226" stroke="#eeeeee" stroke-width="0.600"/>
<path d="M201.70000000000002 116.06h2.400v1.900h-2.400z" fill="#8aa0ac"/><circle cx="202.9" cy="113.76" r="3" fill="#f8e59c" stroke="#ead080" stroke-width="0.500"/><circle cx="202.20000000000002" cy="113.06" r="1.300" fill="#fdf3c0"/>
<rect x="213.3" y="110.56" width="6.500" height="6.200" rx="0.600" fill="#8ed0f7" stroke="#4aaef0" stroke-width="0.400"/><rect x="215.10000000000002" y="112.76" width="7.800" height="5.600" rx="0.600" fill="#58b8f4"/><path d="M216.9 115.16h3.400l-1.200 1.400h-2.200z" fill="#eaf6fe"/><path d="M214.5 111.86h3" stroke="#c8e8fb" stroke-width="0.700"/>
<path d="M0 130.42h226" stroke="#eeeeee" stroke-width="0.600"/>
<path d="M201.70000000000002 126.74h2.400v1.900h-2.400z" fill="#8aa0ac"/><circle cx="202.9" cy="124.44" r="3" fill="#f8e59c" stroke="#ead080" stroke-width="0.500"/><circle cx="202.20000000000002" cy="123.74" r="1.300" fill="#fdf3c0"/>
<rect x="213.3" y="121.24" width="6.500" height="6.200" rx="0.600" fill="#8ed0f7" stroke="#4aaef0" stroke-width="0.400"/><rect x="215.10000000000002" y="123.44" width="7.800" height="5.600" rx="0.600" fill="#58b8f4"/><path d="M216.9 125.84h3.400l-1.200 1.400h-2.200z" fill="#eaf6fe"/><path d="M214.5 122.54h3" stroke="#c8e8fb" stroke-width="0.700"/>
<path d="M0 141.10h226" stroke="#eeeeee" stroke-width="0.600"/>
<path d="M201.70000000000002 137.42h2.400v1.900h-2.400z" fill="#8aa0ac"/><circle cx="202.9" cy="135.12" r="3" fill="#f8e59c" stroke="#ead080" stroke-width="0.500"/><circle cx="202.20000000000002" cy="134.42" r="1.300" fill="#fdf3c0"/>
<rect x="213.3" y="131.92" width="6.500" height="6.200" rx="0.600" fill="#8ed0f7" stroke="#4aaef0" stroke-width="0.400"/><rect x="215.10000000000002" y="134.12" width="7.800" height="5.600" rx="0.600" fill="#58b8f4"/><path d="M216.9 136.52h3.400l-1.200 1.400h-2.200z" fill="#eaf6fe"/><path d="M214.5 133.22h3" stroke="#c8e8fb" stroke-width="0.700"/>
<path d="M0 151.78h226" stroke="#eeeeee" stroke-width="0.600"/>
<path d="M201.70000000000002 148.10h2.400v1.900h-2.400z" fill="#8aa0ac"/><circle cx="202.9" cy="145.80" r="3" fill="#f8e59c" stroke="#ead080" stroke-width="0.500"/><circle cx="202.20000000000002" cy="145.10" r="1.300" fill="#fdf3c0"/>
<rect x="213.3" y="142.60" width="6.500" height="6.200" rx="0.600" fill="#8ed0f7" stroke="#4aaef0" stroke-width="0.400"/><rect x="215.10000000000002" y="144.80" width="7.800" height="5.600" rx="0.600" fill="#58b8f4"/><path d="M216.9 147.20h3.400l-1.200 1.400h-2.200z" fill="#eaf6fe"/><path d="M214.5 143.90h3" stroke="#c8e8fb" stroke-width="0.700"/>
<path d="M0 162.46h226" stroke="#eeeeee" stroke-width="0.600"/>
<path d="M201.70000000000002 158.78h2.400v1.900h-2.400z" fill="#8aa0ac"/><circle cx="202.9" cy="156.48" r="3" fill="#f8e59c" stroke="#ead080" stroke-width="0.500"/><circle cx="202.20000000000002" cy="155.78" r="1.300" fill="#fdf3c0"/>
<rect x="213.3" y="153.28" width="6.500" height="6.200" rx="0.600" fill="#8ed0f7" stroke="#4aaef0" stroke-width="0.400"/><rect x="215.10000000000002" y="155.48" width="7.800" height="5.600" rx="0.600" fill="#58b8f4"/><path d="M216.9 157.88h3.400l-1.200 1.400h-2.200z" fill="#eaf6fe"/><path d="M214.5 154.58h3" stroke="#c8e8fb" stroke-width="0.700"/>
<path d="M0 173.14h226" stroke="#eeeeee" stroke-width="0.600"/>
<path d="M5.800 165.20l2.600 2.600-2.600 2.600" fill="none" stroke="#444" stroke-width="0.700"/>
<path d="M201.8 169.46h2.200v1.900h-2.200z" fill="#b0b0b0"/><circle cx="202.9" cy="167.16" r="2.900" fill="#fafafa" stroke="#a8a8a8" stroke-width="0.600"/>
<path d="M0 183.82h226" stroke="#eeeeee" stroke-width="0.600"/>
<path d="M5.800 175.88l2.600 2.600-2.600 2.600" fill="none" stroke="#444" stroke-width="0.700"/>
<path d="M201.8 180.14h2.200v1.900h-2.200z" fill="#b0b0b0"/><circle cx="202.9" cy="177.84" r="2.900" fill="#fafafa" stroke="#a8a8a8" stroke-width="0.600"/>
<path d="M0 194.50h226" stroke="#eeeeee" stroke-width="0.600"/>
<path d="M201.8 190.82h2.200v1.900h-2.200z" fill="#b0b0b0"/><circle cx="202.9" cy="188.52" r="2.900" fill="#fafafa" stroke="#a8a8a8" stroke-width="0.600"/>
<path d="M0 205.18h226" stroke="#eeeeee" stroke-width="0.600"/>
<path d="M201.8 201.50h2.200v1.900h-2.200z" fill="#b0b0b0"/><circle cx="202.9" cy="199.20" r="2.900" fill="#fafafa" stroke="#a8a8a8" stroke-width="0.600"/>
<path d="M207.600 81.1l2.700 2.800 2.700-2.800" fill="none" stroke="#111" stroke-width="1.100"/>
<path d="M218.200 79.9l5.200 5.200M223.400 79.9l-5.200 5.200" stroke="#111" stroke-width="0.900"/>
<path d="M207.600 264.20000000000005l2.700 2.800 2.700-2.800" fill="none" stroke="#111" stroke-width="1.100"/>
<path d="M218.200 263.0l5.200 5.200M223.400 263.0l-5.200 5.200" stroke="#111" stroke-width="0.900"/>
<path d="M109 258.200h7.500" stroke="#b8b8b8" stroke-width="0.600" stroke-dasharray="0.800 0.900"/>
<path d="M228.300 307v8" stroke="#b8b8b8" stroke-width="0.600" stroke-dasharray="0.800 0.900"/>
<rect x="14.299999999999999" y="272.500" width="0.600" height="10.500" fill="#dcdcdc"/>
<rect x="29.3" y="272.500" width="0.600" height="10.500" fill="#dcdcdc"/>
<rect x="96.2" y="272.500" width="0.600" height="10.500" fill="#dcdcdc"/>
<g transform="translate(2.3 274.3) scale(1)"><path d="M1 1h5.500l1.500 1H2.500zM1 3.300h5.500l1.500 1H2.500zM1 5.600h5.500l1.500 1H2.500z" fill="#fff" stroke="#333" stroke-width="0.600" stroke-linejoin="round"/><path d="M.3 1.500h1M.3 3.800h1M.3 6.100h1" stroke="#333" stroke-width="0.700"/></g>
<circle cx="22.400" cy="278.1" r="4.100" fill="#1478d0"/><path d="M22.400 277.5v2.900" stroke="#fff" stroke-width="1.100"/><circle cx="22.400" cy="276.0" r="0.700" fill="#fff"/><path d="M21.300 280.40000000000003h2.200M21.500 277.5h.9" stroke="#fff" stroke-width="0.600"/>
<path d="M37.500 274.6v4.500l-3 2.500M37.500 279.1l3.600 2" fill="none" stroke="#3a6ea8" stroke-width="0.600"/>
<rect x="45.100" y="271.700" width="12.800" height="12.500" fill="#cce6f8" stroke="#8fc4ea" stroke-width="0.500"/>
<g transform="translate(47.3 274.3) scale(1)"><path d="M.5 1l3.600 1.200L7.800 1v4.600L4.100 7.600.5 5.600z" fill="#e8f0f8" stroke="#2a4a78" stroke-width="0.700" stroke-linejoin="round"/><path d="M4.100 2.200v5.400" stroke="#2a4a78" stroke-width="0.600"/></g>
<g transform="translate(60 274.1) scale(1)"><path d="M2.500 1.500l3-1 2.500 1v4l-3 1.300-2.500-1z" fill="#9ab" stroke="#223" stroke-width="0.600" stroke-linejoin="round"/><path d="M2.500 1.500l2.500 1 3-1M5 2.500v4.300" fill="none" stroke="#223" stroke-width="0.500"/><ellipse cx="4" cy="6" rx="3.800" ry="1.600" fill="none" stroke="#444" stroke-width="0.500"/></g>
<g transform="translate(72.7 275.1) scale(1)"><ellipse cx="4.200" cy="3.400" rx="4" ry="2" fill="none" stroke="#222" stroke-width="0.600"/><circle cx="4.200" cy="2.600" r="1.900" fill="#111"/><path d="M5.500 4.500l1.500 1.800" stroke="#222" stroke-width="0.600"/></g>
<g transform="translate(85.5 274.1) scale(1)"><ellipse cx="4" cy="5.300" rx="3.800" ry="1.800" fill="none" stroke="#222" stroke-width="0.600"/><circle cx="4" cy="1.900" r="1.100" fill="none" stroke="#222" stroke-width="0.600"/><path d="M4 3v3.800" stroke="#222" stroke-width="0.700"/></g>
<g transform="translate(101.7 274.1) scale(1)"><path d="M.5 1.200h3v5.800h-3z" fill="#6aa8d8" stroke="#335" stroke-width="0.500"/><path d="M3.500 1.200l2-.6v7l-2-.6z" fill="#9cc8e8" stroke="#335" stroke-width="0.400"/><path d="M5.500.6h1.800v7H5.500z" fill="#f8b0b0" stroke="#e82020" stroke-width="0.600"/></g>
<g transform="translate(114.4 274.1) scale(1)"><rect x="0.400" y="0.800" width="7" height="6.600" fill="#6aa8d8" stroke="#335" stroke-width="0.500"/><path d="M.4.800h7L.4 7.400z" fill="#30d040"/><path d="M8 .2L.2 8" stroke="#333" stroke-width="0.500"/></g>
<g transform="translate(127.1 274.1) scale(1)"><rect x="0.400" y="0.800" width="7.200" height="6.600" fill="#6aa8d8" stroke="#4a3ab8" stroke-width="0.600"/><path d="M.4 2.600h7.200" stroke="#4a3ab8" stroke-width="0.800"/><path d="M1.500 4h5v2h-5z" fill="#9cc8e8"/></g>
<g transform="translate(139.6 273.90000000000003) scale(1)"><path d="M4.200.4l3.700 2v4l-3.700 2-3.700-2v-4z" fill="#8a9aa8" stroke="#445" stroke-width="0.500"/><path d="M.5 2.400l3.700 2 3.700-2M4.200 4.400v4" fill="none" stroke="#445" stroke-width="0.400"/><path d="M2 3.500l2-1 2.200 1-2 1z" fill="#e06060"/><path d="M2 5.200l2 1 2.200-1" stroke="#40b8d0" stroke-width="0.700" fill="none"/></g>
<g transform="translate(152.3 274.6) scale(1)"><path d="M.2 3.500C2 .8 6.400.8 8.200 3.500 6.400 6.200 2 6.200.2 3.500z" fill="#111"/><circle cx="4.200" cy="3.500" r="1.400" fill="#fff"/><circle cx="4.200" cy="3.500" r="0.700" fill="#111"/><path d="M7.200.3L1.200 6.900" stroke="#111" stroke-width="0.600"/></g>
<g transform="translate(165.2 273.90000000000003) scale(1)"><circle cx="3.800" cy="3.800" r="3.300" fill="#e8f0fa" stroke="#1830d0" stroke-width="0.700"/><path d="M3.800 1.200v5.200M1.200 3.800h5.200M2 2l3.600 3.600M5.600 2L2 5.600" stroke="#1830d0" stroke-width="0.800"/><path d="M6.300 6.300l2 2" stroke="#222" stroke-width="1.100"/></g>
<g transform="translate(178.3 273.90000000000003) scale(1)"><rect x="0.300" y="3.500" width="4.200" height="4.600" fill="#d8e0f4" stroke="#98a8d8" stroke-width="0.400"/><circle cx="4" cy="3" r="2.300" fill="#e8f0fa" stroke="#555" stroke-width="0.700"/><path d="M5.700 4.700l2.500 2.600" stroke="#222" stroke-width="1.100"/></g>
<g transform="translate(192 273.90000000000003) scale(1)"><path d="M2.300 4V1.800a.6.600 0 0 1 1.100 0V1a.6.600 0 0 1 1.200 0v.5a.6.600 0 0 1 1.100 0v.8a.55.55 0 0 1 1.100 0V6c0 1.500-.8 2.400-2.300 2.400S2.300 7.500 1.500 6.300L.6 4.800c-.3-.6.500-1 .9-.5z" fill="#fff" stroke="#444" stroke-width="0.500"/></g>
<g transform="translate(205.2 273.90000000000003) scale(1)"><path d="M4.200.3l1.800 2H5v1.200h1.200v-1l2 1.700-2 1.700v-1H5v1.200h1l-1.800 2-1.800-2h1V4.900H2.200v1l-2-1.700 2-1.700v1h1.200V2.300h-1z" fill="#fff" stroke="#333" stroke-width="0.550" stroke-linejoin="round"/></g>
<g transform="translate(218.3 273.90000000000003) scale(1)"><rect x="0.400" y="0.400" width="7.400" height="6.400" fill="#fff" stroke="#444" stroke-width="0.600"/><rect x="0.400" y="0.400" width="7.400" height="1.700" fill="#30c0c8"/><path d="M2.500 3.500c2.500 0 4 1 4.200 3.500" fill="none" stroke="#1830d0" stroke-width="1.100"/><path d="M2 2.600l-.3 2.200 2-.6z" fill="#1830d0"/></g>
</svg>
<div class="t" style="left:13.4px;top:90.70px;color:#111;">Const. elements</div>
<div class="t" style="left:23.6px;top:101.38px;color:#111;">Walls</div>
<div class="t" style="left:23.6px;top:112.06px;color:#111;">Floor slabs</div>
<div class="t" style="left:23.6px;top:122.74px;color:#111;">Columns</div>
<div class="t" style="left:23.6px;top:133.42px;color:#111;">Floor slab elevation change</div>
<div class="t" style="left:23.6px;top:144.10px;color:#111;">Spaces</div>
<div class="t" style="left:23.6px;top:154.78px;color:#111;">Nearby buildings and property limits</div>
<div class="t" style="left:13.4px;top:165.46px;color:#111;">Floor above</div>
<div class="t" style="left:13.4px;top:176.14px;color:#111;">Floor below</div>
<div class="t" style="left:13.4px;top:186.82px;color:#111;">Annotations</div>
<div class="t" style="left:13.4px;top:197.50px;color:#111;">Point cloud</div>
<!-- 3D view -->
<svg class="a" style="left:0;top:0;" width="227" height="545" viewBox="0 0 227 545">
<path d="M30.9 294L35.6 294L35.6 514L30.9 514Z" fill="#e6e6e6" stroke="#b8b8b8" stroke-width="0.5"/>
<path d="M35.6 294L48 312.8L49.9 349.2L49.9 492.5L48 498.5L35.6 514Z" fill="#7c7c7c"/>
<path d="M48 312.8L183 312.8L183 316L48.5 316Z" fill="#fdfdfd" stroke="#c4c4c4" stroke-width="0.4"/>
<path d="M48.5 316L183 316L187 321L50 321Z" fill="#6c6c6c"/>
<path d="M50 321L187 321L189 329.6L50 329.6Z" fill="#8ba1ab"/>
<path d="M203.3 331L208.4 331L208.4 481.5L203.3 481.5Z" fill="#fdfdfd" stroke="#c4c4c4" stroke-width="0.4"/>
<path d="M188 329.6L208.4 329.6L208.4 332.5L188 332.5Z" fill="#fdfdfd" stroke="#c4c4c4" stroke-width="0.4"/>
<path d="M35.6 329.6L203.3 329.6L203.3 334.5L35.6 334.5Z" fill="#fdfdfd" stroke="#c4c4c4" stroke-width="0.4"/>
<path d="M35.6 334.5L203.3 334.5L188.5 349.2L49.9 349.2Z" fill="#6c6c6c"/>
<path d="M49.9 349.2L188.5 349.2L188.5 387.3L49.9 387.3Z" fill="#c8c8c8"/>
<path d="M188.5 349.2L203.3 334.5L203.3 476.5L186.2 466.3L186.2 414L188.5 387.3Z" fill="#7c7c7c"/>
<path d="M68.6 342.5L89.7 342.5L91.8 348.6L71.9 348.6Z" fill="#8ba1ab"/>
<path d="M156.4 342.5L176.1 342.5L172.1 348.6L152.2 348.6Z" fill="#8ba1ab"/>
<path d="M114.8 336.2L117.1 336.2L117.1 388L114.8 388Z" fill="#fdfdfd" stroke="#c4c4c4" stroke-width="0.4"/>
<path d="M189.2 357.3L194.4 356.1L194.4 370.2L189.2 371.3Z" fill="#f4f4f4" stroke="#999" stroke-width="0.5"/>
<path d="M49.9 389.5L201 389.5L201 412L110 412L110 420.8L49.9 420.8Z" fill="#c8c8c8"/>
<path d="M37.9 387.3L200.9 387.3L201.8 389.5L36.8 389.5Z" fill="#fdfdfd" stroke="#c4c4c4" stroke-width="0.4"/>
<path d="M51.5 394.3L76.6 394.3L76.6 418.7L51.5 418.7Z" fill="#fdfdfd" stroke="#d8d8d8" stroke-width="0.4"/>
<path d="M157.4 389.5L159.7 389.5L159.7 411.7L157.4 411.7Z" fill="#fdfdfd" stroke="#c4c4c4" stroke-width="0.4"/>
<path d="M150 393L154.5 391L154.5 412L150 410Z" fill="#9a9a9a"/>
<path d="M186.2 389.5L201.5 389.5L201.5 411.7L186.2 411.7Z" fill="#7c7c7c"/>
<path d="M137 414L186.2 414L186.2 466.3L137 466.3Z" fill="#c8c8c8"/>
<path d="M137 443.800h49.200" stroke="#b4b4b4" stroke-width="0.500"/>
<path d="M138.2 466.3L186.2 466.3L202.6 476.1L138.2 476.1Z" fill="#555"/>
<path d="M140.5 467.9L153.4 467.9L153.4 470.3L140.5 470.3Z" fill="#fdfdfd"/>
<path d="M189.2 454.3L193.2 455.7L193.2 465.6L189.2 463.7Z" fill="#f4f4f4" stroke="#999" stroke-width="0.5"/>
<path d="M49.9 425.3L108.2 425.3L108.2 457.4L130.4 457.4L130.4 492L49.9 492Z" fill="#8ba1ab"/>
<path d="M49.9 492L130.4 492L130.4 496L48 496Z" fill="#6c6c6c"/>
<path d="M35.6 420.6L111.5 420.6L111.5 424.6L35.6 424.6Z" fill="#fdfdfd" stroke="#c4c4c4" stroke-width="0.4"/>
<path d="M108.9 411.7L201.4 411.7L201.4 414L108.9 414Z" fill="#fdfdfd" stroke="#c4c4c4" stroke-width="0.4"/>
<path d="M108.2 414L112 414L112 453.6L137.5 453.6L137.5 457.4L108.2 457.4Z" fill="#fdfdfd" stroke="#c4c4c4" stroke-width="0.4"/>
<path d="M133 414L137 414L137 453.6L133 453.6Z" fill="#fdfdfd" stroke="#c4c4c4" stroke-width="0.4"/>
<path d="M130.4 457.4L134.7 457.4L134.7 499L48 499L48 496L130.4 496Z" fill="#fdfdfd" stroke="#c4c4c4" stroke-width="0.4"/>
<path d="M134.7 457.4L137.5 457.4L137.5 477.3L208.4 477.3L208.4 481.5L134.7 481.5Z" fill="#fdfdfd" stroke="#c4c4c4" stroke-width="0.4"/>
<path d="M113.6 416L130 416L130 432.8L113.6 432.8Z" fill="#fdfdfd" stroke="#ddd" stroke-width="0.4"/>
<path d="M112.9 433.5L133 433.5L133 437.5L112.9 437.5Z" fill="#555"/>
<path d="M112.9 438.6L133 438.6L133 445.2L112.9 445.2Z" fill="#fdfdfd" stroke="#ddd" stroke-width="0.4"/>
<path d="M112.9 445.7L133 445.7L136 453.4L112.9 453.4Z" fill="#555"/>
<rect x="182.700" y="294" width="33.700" height="33.500" fill="#fff" stroke="#989898" stroke-width="0.800"/>
<text transform="translate(199.400 314.500) scale(0.970 1)" font-family="Liberation Sans, sans-serif" font-weight="bold" font-size="9.400" fill="#111" text-anchor="middle">Top</text>
<path d="M18.700 517.800V498" stroke="#20c828" stroke-width="1.100"/><path d="M18.700 494.500l-1.800 4.500h3.600z" fill="#20c828"/>
<path d="M18.700 517.800H38" stroke="#e82020" stroke-width="1.100"/><path d="M42.500 517.800l-4.800-1.800v3.600z" fill="#e82020"/>
<rect x="17.200" y="516.300" width="3" height="3" fill="#2038d8"/>
<text x="18.700" y="491.500" font-family="Liberation Sans, sans-serif" font-weight="bold" font-size="6.500" fill="#20c828" text-anchor="middle">Y</text>
<text x="46.800" y="519.800" font-family="Liberation Sans, sans-serif" font-weight="bold" font-size="6.500" fill="#e82020" text-anchor="middle">X</text>
</svg>
<!-- floor plan -->
<svg class="a" style="left:0;top:0;" width="1024" height="555" viewBox="0 0 1024 555">
<path d="M361.2 181.6H627.4V463.6H523.5V512.4H361.2Z" fill="#d8d8d8" stroke="#6e6e6e" stroke-width="0.8"/>
<path d="M362.6 183H626V462.2H522.1V511H362.6Z" fill="none" stroke="#b4b4b4" stroke-width="2.6"/>
<path d="M364.6 185.3H623.6V460H519.5V509.2H364.6Z" fill="none" stroke="#e6e6e6" stroke-width="5.5"/>
<path d="M368 319.4H620.4V323.2H368ZM487.3 241.8H490.8V319.4H487.3ZM521.6 357.8H620.4V361H521.6ZM553 323.2H556.5V357.8H553Z" fill="#e7e6e1"/>
<defs>
<clipPath id="c_top"><path d="M364.6 185.4H623.6V238.2H364.6Z"/></clipPath>
<clipPath id="c_o8"><path d="M364.6 240.6H489V321.2H364.6Z"/></clipPath>
<clipPath id="c_o9"><path d="M489 240.6H623.6V321.2H489Z"/></clipPath>
<clipPath id="c_st"><path d="M368 323.2H417.7V370.2H368Z"/></clipPath>
<clipPath id="c_cor"><path d="M417.7 321.2H554.6V359.4H478.5V374.4H417.7Z"/></clipPath>
<clipPath id="c_wc"><path d="M554.6 321.2H623.6V359.4H554.6Z"/></clipPath>
<clipPath id="c_o10"><path d="M519.5 359.4H623.6V418H519.5Z"/></clipPath>
<clipPath id="c_o10b"><path d="M519.5 418H623.6V460H519.5Z"/></clipPath>
<clipPath id="c_bl"><path d="M364.6 374.4H478.5V425H519.5V509.2H364.6Z"/></clipPath>
</defs>
<path d="M368 188H620.4V234.5H368Z" fill="#fff"/>
<path d="M368 241.8H487.3V319.4H368Z" fill="#dedefa"/>
<path d="M490.8 241.8H620.4V319.4H490.8Z" fill="#dedefa"/>
<path d="M368 323.2H417.7V370.2H368Z" fill="#dedefa"/>
<path d="M417.7 323.2H553V357.8H476V370.2H417.7Z" fill="#dedefa"/>
<path d="M556.5 323.2H620.4V357.8H556.5Z" fill="#dedefa"/>
<path d="M521.6 361H620.4V418H521.6Z" fill="#dedefa"/>
<path d="M522.6 418H620.4V456.8H522.6Z" fill="#dedefa"/>
<path d="M368 377.8H475.6V428.6H515.6V506.6H368Z" fill="#fff"/>
<g stroke="#8c8c74" stroke-width="0.55" fill="none">
<path d="M378 333.8H416.7V359.4H378ZM367.7 346.3H416.7"/>
<path d="M388.4 323.2V370.5"/>
<path d="M393.5 323.2V370.5"/>
<path d="M400 323.2V370.5"/>
<path d="M406 323.2V370.5"/>
<path d="M410.8 323.2V370.5"/>
<path d="M367.7 323.2L388.2 346.3L367.7 370.5M378 333.8L388.2 346.3L378 359.4M390 323.2L400 345.700M391.700 323.200L401.200 344.500M410.800 354L416.700 359.400L410.800 364.800"/>
</g>
<path d="M368 188H620.4V234.5H368Z" fill="none" stroke="#5a5a5a" stroke-width="0.9"/>
<path d="M368 241.8H487.3V319.4H368Z" fill="none" stroke="#5a5a5a" stroke-width="0.9"/>
<path d="M490.8 241.8H620.4V319.4H490.8Z" fill="none" stroke="#5a5a5a" stroke-width="0.9"/>
<path d="M417.7 323.2H553V357.8H476V370.2H417.7Z" fill="none" stroke="#5a5a5a" stroke-width="0.9"/>
<path d="M556.5 323.2H620.4V357.8H556.5Z" fill="none" stroke="#5a5a5a" stroke-width="0.9"/>
<path d="M368 377.8H475.6V428.6H515.6V506.6H368Z" fill="none" stroke="#5a5a5a" stroke-width="0.9"/>
<path d="M417.7 323.2H368V370.2H417.7" fill="none" stroke="#5a5a5a" stroke-width="0.9"/>
<path d="M521.6 418V361H620.4V418" fill="none" stroke="#5a5a5a" stroke-width="0.9"/>
<path d="M521.6 418H522.6V456.8H620.4V418" fill="none" stroke="#5a5a5a" stroke-width="0.9"/>
<path d="M476 357.8H521.6V428.5H476Z" fill="#e4e4e4" stroke="#5a5a5a" stroke-width="0.9"/>
<path d="M479.2 360.3H519V425H479.2Z" fill="none" stroke="#ead9c0" stroke-width="1.2"/>
<path d="M482.6 362.8H516.9V396.5H482.6Z" fill="#d9f5fb" stroke="#4a4a4a" stroke-width="1"/>
<path d="M482.6 401.6H516.9V421H482.6Z" fill="#d9f5fb" stroke="#4a4a4a" stroke-width="1"/>
<g clip-path="url(#c_top)"><path d="M-44.3 560L365.7 150M-12.4 560L397.6 150M19.6 560L429.6 150M51.6 560L461.6 150M83.5 560L493.5 150M115.5 560L525.5 150M147.4 560L557.4 150M179.4 560L589.4 150M211.3 560L621.3 150M243.2 560L653.2 150M275.2 560L685.2 150M307.2 560L717.2 150M339.1 560L749.1 150M371.0 560L781.0 150M403.0 560L813.0 150M435.0 560L845.0 150M466.9 560L876.9 150M498.8 560L908.8 150" stroke="#c27fd4" stroke-width="0.75" fill="none"/></g>
<g clip-path="url(#c_o8)"><path d="M-44.3 560L365.7 150M-12.4 560L397.6 150M19.6 560L429.6 150M51.6 560L461.6 150M83.5 560L493.5 150M115.5 560L525.5 150M147.4 560L557.4 150M179.4 560L589.4 150M211.3 560L621.3 150M243.2 560L653.2 150M275.2 560L685.2 150M307.2 560L717.2 150M339.1 560L749.1 150M371.0 560L781.0 150M403.0 560L813.0 150M435.0 560L845.0 150M466.9 560L876.9 150M498.8 560L908.8 150" stroke="#e6ad6c" stroke-width="0.75" fill="none"/></g>
<g clip-path="url(#c_o9)"><path d="M-44.3 560L365.7 150M-12.4 560L397.6 150M19.6 560L429.6 150M51.6 560L461.6 150M83.5 560L493.5 150M115.5 560L525.5 150M147.4 560L557.4 150M179.4 560L589.4 150M211.3 560L621.3 150M243.2 560L653.2 150M275.2 560L685.2 150M307.2 560L717.2 150M339.1 560L749.1 150M371.0 560L781.0 150M403.0 560L813.0 150M435.0 560L845.0 150M466.9 560L876.9 150M498.8 560L908.8 150" stroke="#e6ad6c" stroke-width="0.75" fill="none"/></g>
<g clip-path="url(#c_cor)"><path d="M-44.3 560L365.7 150M-12.4 560L397.6 150M19.6 560L429.6 150M51.6 560L461.6 150M83.5 560L493.5 150M115.5 560L525.5 150M147.4 560L557.4 150M179.4 560L589.4 150M211.3 560L621.3 150M243.2 560L653.2 150M275.2 560L685.2 150M307.2 560L717.2 150M339.1 560L749.1 150M371.0 560L781.0 150M403.0 560L813.0 150M435.0 560L845.0 150M466.9 560L876.9 150M498.8 560L908.8 150" stroke="#e6ad6c" stroke-width="0.75" fill="none"/></g>
<g clip-path="url(#c_wc)"><path d="M-44.3 560L365.7 150M-12.4 560L397.6 150M19.6 560L429.6 150M51.6 560L461.6 150M83.5 560L493.5 150M115.5 560L525.5 150M147.4 560L557.4 150M179.4 560L589.4 150M211.3 560L621.3 150M243.2 560L653.2 150M275.2 560L685.2 150M307.2 560L717.2 150M339.1 560L749.1 150M371.0 560L781.0 150M403.0 560L813.0 150M435.0 560L845.0 150M466.9 560L876.9 150M498.8 560L908.8 150" stroke="#e6ad6c" stroke-width="0.75" fill="none"/></g>
<g clip-path="url(#c_o10)"><path d="M-44.3 560L365.7 150M-12.4 560L397.6 150M19.6 560L429.6 150M51.6 560L461.6 150M83.5 560L493.5 150M115.5 560L525.5 150M147.4 560L557.4 150M179.4 560L589.4 150M211.3 560L621.3 150M243.2 560L653.2 150M275.2 560L685.2 150M307.2 560L717.2 150M339.1 560L749.1 150M371.0 560L781.0 150M403.0 560L813.0 150M435.0 560L845.0 150M466.9 560L876.9 150M498.8 560L908.8 150" stroke="#e6ad6c" stroke-width="0.75" fill="none"/></g>
<g clip-path="url(#c_o10b)"><path d="M-44.3 560L365.7 150M-12.4 560L397.6 150M19.6 560L429.6 150M51.6 560L461.6 150M83.5 560L493.5 150M115.5 560L525.5 150M147.4 560L557.4 150M179.4 560L589.4 150M211.3 560L621.3 150M243.2 560L653.2 150M275.2 560L685.2 150M307.2 560L717.2 150M339.1 560L749.1 150M371.0 560L781.0 150M403.0 560L813.0 150M435.0 560L845.0 150M466.9 560L876.9 150M498.8 560L908.8 150" stroke="#666666" stroke-width="0.75" fill="none"/></g>
<g clip-path="url(#c_bl)"><path d="M-44.3 560L365.7 150M-12.4 560L397.6 150M19.6 560L429.6 150M51.6 560L461.6 150M83.5 560L493.5 150M115.5 560L525.5 150M147.4 560L557.4 150M179.4 560L589.4 150M211.3 560L621.3 150M243.2 560L653.2 150M275.2 560L685.2 150M307.2 560L717.2 150M339.1 560L749.1 150M371.0 560L781.0 150M403.0 560L813.0 150M435.0 560L845.0 150M466.9 560L876.9 150M498.8 560L908.8 150" stroke="#c27fd4" stroke-width="0.75" fill="none"/></g>
<g fill="none" stroke-width="0.7">
<path d="M364.6 238.5V185.4H623.6" stroke="#b060c0"/>
<path d="M364.6 185.4V238.5" stroke="#d4219c" stroke-width="1"/>
<path d="M364.6 374V509.2H519.5V463" stroke="#c98ad8"/>
<path d="M364.6 374V509.2" stroke="#d060c0" stroke-width="0.8"/>
<path d="M364.6 240.6H623.6V460" stroke="#e8b57a"/>
<path d="M364.6 321.4H417.7" stroke="#e8b57a" stroke-width="0.7"/>
<path d="M364.6 374.600H417.700" stroke="#c98ad8" stroke-width="0.700"/>
<path d="M417.7 321.4V374.4H478.5" stroke="#e8b57a" stroke-width="0.9"/>
<path d="M521.6 418H620.4" stroke="#e6a964" stroke-width="0.800"/>
<path d="M364.6 241V374" stroke="#9fc080" stroke-width="0.6"/>
<path d="M523 459.6H623.6" stroke="#a0a878" stroke-width="0.6"/>
</g>
<g fill="#c8205a">
<rect x="447.5" y="320" width="18.5" height="2.4"/>
<rect x="492.6" y="320" width="18.7" height="2.4"/>
<rect x="522" y="358.2" width="18.7" height="2.3"/>
<rect x="553.3" y="324.5" width="2.6" height="20.5"/>
</g>
<g fill="none" stroke="#5a3aa0" stroke-width="0.8">
<path d="M409 234.8V241.4M445.3 234.8V241.4M409 239.6H445.3"/>
<path d="M554.4 234.8V241.4M591.2 234.8V241.4M554.4 239.6H591.2"/>
<path d="M620.8 264.3H626.8M620.8 287.7H626.8M625.4 264.3V287.7" stroke="#4a3ab8"/>
<path d="M621.9 264.3V287.7" stroke="#4a3ab8"/>
<path d="M424.6 371.5V377.4M461.5 371.5V377.4M424.6 374.6H461.5"/>
<path d="M533 459V462.6M555.8 459V462.6M533 460.8H555.8" stroke="#5060c8"/>
<path d="M621 431.5H627M621 454.8H627M624 431.5V454.8" stroke="#6070d0"/>
<path d="M516 429.7H521M516 454.3H521M518.5 429.7V454.3" stroke="#a090c0" stroke-width="0.6"/>
</g>
<path d="M591.2 232.5V241.5M591.2 239.8H595" stroke="#30b030" stroke-width="0.8" fill="none"/>
<g fill="none" stroke="#9a9a92" stroke-width="0.5">
<rect x="377.5" y="258.7" width="26.1" height="9.9" rx="0.600" stroke="#a4a498" stroke-width="0.700"/>
<ellipse cx="387.8" cy="255.100" rx="3.400" ry="1.900" fill="#ececf4" stroke="#8e8e78" stroke-width="0.800"/>
<path d="M384.6 259.800h6.400v1.200a3.200 1 0 0 1-6.400 0zM385.0 263.700h5.600a2.800 1.600 0 0 1-5.600 0z" fill="#8c8c70" stroke="none"/>
<rect x="410.8" y="258.7" width="26.1" height="9.9" rx="0.600" stroke="#a4a498" stroke-width="0.700"/>
<ellipse cx="421.1" cy="255.100" rx="3.400" ry="1.900" fill="#ececf4" stroke="#8e8e78" stroke-width="0.800"/>
<path d="M417.90000000000003 259.800h6.400v1.200a3.200 1 0 0 1-6.400 0zM418.3 263.700h5.600a2.800 1.600 0 0 1-5.600 0z" fill="#8c8c70" stroke="none"/>
<rect x="447.6" y="258.7" width="26.1" height="9.9" rx="0.600" stroke="#a4a498" stroke-width="0.700"/>
<ellipse cx="457.90000000000003" cy="255.100" rx="3.400" ry="1.900" fill="#ececf4" stroke="#8e8e78" stroke-width="0.800"/>
<path d="M454.70000000000005 259.800h6.400v1.200a3.200 1 0 0 1-6.400 0zM455.1 263.700h5.600a2.800 1.600 0 0 1-5.600 0z" fill="#8c8c70" stroke="none"/>
<rect x="498.7" y="258.7" width="26.1" height="9.9" rx="0.600" stroke="#a4a498" stroke-width="0.700"/>
<ellipse cx="509.0" cy="255.100" rx="3.400" ry="1.900" fill="#ececf4" stroke="#8e8e78" stroke-width="0.800"/>
<path d="M505.8 259.800h6.400v1.200a3.200 1 0 0 1-6.400 0zM506.2 263.700h5.600a2.800 1.600 0 0 1-5.600 0z" fill="#8c8c70" stroke="none"/>
<rect x="532" y="258.7" width="26.1" height="9.9" rx="0.600" stroke="#a4a498" stroke-width="0.700"/>
<ellipse cx="542.3" cy="255.100" rx="3.400" ry="1.900" fill="#ececf4" stroke="#8e8e78" stroke-width="0.800"/>
<path d="M539.0999999999999 259.800h6.400v1.200a3.200 1 0 0 1-6.400 0zM539.5 263.700h5.600a2.800 1.600 0 0 1-5.600 0z" fill="#8c8c70" stroke="none"/>
<rect x="568.6" y="258.7" width="26.1" height="9.9" rx="0.600" stroke="#a4a498" stroke-width="0.700"/>
<ellipse cx="578.9" cy="255.100" rx="3.400" ry="1.900" fill="#ececf4" stroke="#8e8e78" stroke-width="0.800"/>
<path d="M575.6999999999999 259.800h6.400v1.200a3.200 1 0 0 1-6.400 0zM576.1 263.700h5.600a2.800 1.600 0 0 1-5.600 0z" fill="#8c8c70" stroke="none"/>
<rect x="591.6" y="283.4" width="9.3" height="25.5"/>
<path d="M593.8 293v5.6M596 293v5.6M598 292.6v6.4" stroke="#77776c" stroke-width="0.8"/><path d="M599.6 292.6a3 3.2 0 0 1 0 6.4"/>
<rect x="596" y="389.5" width="9" height="20"/>
<path d="M598 397v5.2M600 397v5.2M602 396.6v6" stroke="#77776c" stroke-width="0.8"/><path d="M603.6 396.6a3 3 0 0 1 0 6"/>
<rect x="368.3" y="313.2" width="76.3" height="6.2"/>
<rect x="567.4" y="361.3" width="52.8" height="6.8"/>
<circle cx="573.1" cy="353.2" r="3.6"/><circle cx="591" cy="353.2" r="3.6"/>
<path d="M573.1 355.5v2M591 355.5v2"/>
<path d="M620 333.400h-9.600a4.600 4.600 0 0 0 0 9.200h9.600M616.800 333.400v9.200"/>
<rect x="546.7" y="425.2" width="19.4" height="9.1" rx="0.600" stroke="#a4a498" stroke-width="0.700"/>
<rect x="575.2" y="425.2" width="19.5" height="9.1" rx="0.600" stroke="#a4a498" stroke-width="0.700"/>
<path d="M554.1999999999999 427.6h4.4M554.0 429.3h4.8M554.0 431h4.8" stroke="#77776c" stroke-width="0.8"/>
<path d="M553.4 436.2a3 2.8 0 0 0 6 0" stroke="#555" stroke-width="0.6"/>
<path d="M582.8 427.6h4.4M582.6 429.3h4.8M582.6 431h4.8" stroke="#77776c" stroke-width="0.8"/>
<path d="M582 436.2a3 2.8 0 0 0 6 0" stroke="#555" stroke-width="0.6"/>
</g>
<g font-family="Liberation Sans, sans-serif" font-size="5.900" fill="#2a4aa8" text-anchor="middle">
<text transform="translate(428.3 282.6) scale(0.770 1)">Office 8</text>
<text transform="translate(552.8 282.6) scale(0.770 1)">Office 9</text>
<text transform="translate(444.5 344) scale(0.770 1)">Corridor 3</text>
<text transform="translate(584.3 339) scale(0.770 1)">WC 3f</text>
<text transform="translate(570.5 405.2) scale(0.770 1)">Office 10</text>
<text transform="translate(498.7 381.2) scale(0.770 1)">Lift</text>
<text transform="translate(498.7 412.8) scale(0.770 1)">Risers</text>
<text transform="translate(584.300 343.900) scale(0.770 1)" font-size="4.600">(WC)</text>
</g>
<g stroke="#ff2222" stroke-width="1.25" fill="none">
<path d="M364.1 136.2V182.5M623.8 136.2V182.5M364.1 138.2H623.8"/>
<path d="M627.4 238H670.2V459.9H627.4" stroke-width="1.2"/>
</g>
<g fill="#ff2222"><path d="M364.4 138.2l3.6-1.4v2.8zM623.5 138.2l-3.6-1.4v2.8zM670.2 238.3l-1.4 3.6h2.8zM670.2 459.6l-1.4-3.6h2.8z"/></g>
<text transform="translate(493.500 137.300) scale(0.830 1)" font-family="Liberation Sans, sans-serif" font-size="6" font-weight="bold" fill="#f63838" text-anchor="middle">11.4 m</text>
<text transform="translate(676.100 349.300) rotate(-90) scale(0.745 1)" font-family="Liberation Sans, sans-serif" font-size="5.700" font-weight="bold" fill="#f63838" text-anchor="middle">9.75 m</text>
<path d="M771.5 335.5H805M788.2 318V352" stroke="#c9b891" stroke-width="0.8" fill="none"/>
<path d="M236.500 542l4.300-15.500 4.700 15.500-2.500-1.500-2.200-9.500-1.800 9.500z" fill="#d8e0ee" stroke="#a8b4cc" stroke-width="0.600" stroke-linejoin="round"/>
</svg>
<svg class="a" style="left:0;top:0;" width="1024" height="260" viewBox="0 0 1024 260">
<rect x="660.300" y="105" width="301" height="52.200" fill="#fafafa" stroke="#7a7a7a" stroke-width="0.600"/>
<rect x="660" y="104.700" width="301.600" height="11.200" fill="#676767"/>
<rect x="661.100" y="116.600" width="28.400" height="39.900" fill="#cce6f8" stroke="#9fcbea" stroke-width="0.500"/>
<rect x="711.400" y="190.800" width="136.900" height="60.600" fill="#bad0df" stroke="#a2b8c8" stroke-width="0.500"/>
<rect x="714.100" y="207.300" width="131.200" height="41.700" fill="#fafafa"/>
<rect x="720" y="226.300" width="13.100" height="13.200" fill="#ff0000"/>
<rect x="742.700" y="226.800" width="45.800" height="12.400" fill="#fff" stroke="#8a8a8a" stroke-width="0.600"/>
<rect x="792.500" y="226.800" width="46.700" height="12.400" fill="#fff" stroke="#8a8a8a" stroke-width="0.600"/>
</svg>
<!-- floating toolbars -->
<div class="c" style="left:804px;top:108px;color:#f0f0f0;font-size:5.500px;">Annotations</div>
<div class="c" style="left:675.3px;top:139px;">Elevation</div>
<div class="c" style="left:700.3px;top:139px;">Line</div>
<div class="c" style="left:720.9px;top:139px;">Text</div>
<div class="c" style="left:741.7px;top:139px;">Text</div>
<div class="c" style="left:762.5px;top:139px;">Arc</div>
<div class="c" style="left:783.4px;top:139px;">Circle</div>
<div class="c" style="left:809.7px;top:139px;">Rectangle</div>
<div class="c" style="left:835.5px;top:139px;">Area</div>
<div class="c" style="left:859.2px;top:139px;">Polyline</div>
<div class="c" style="left:885.8px;top:139px;">Edit</div>
<div class="c" style="left:906.9px;top:139px;">Delete</div>
<div class="c" style="left:928px;top:139px;">Move</div>
<div class="c" style="left:949.5px;top:139px;">Assign</div>
<div class="c" style="left:741.700px;top:146.800px;">box</div>
<div class="t" style="left:726.700px;top:197px;color:#1a1a2a;">Properties - Elevation</div>
<div class="t" style="left:720.100px;top:215.300px;color:#111;">Colour</div>
<div class="t" style="left:751.900px;top:215.300px;color:#111;">Thickness</div>
<div class="t" style="left:810.200px;top:215.300px;color:#111;">Size</div>
<div class="t" style="left:745.700px;top:229.900px;color:#111;">Normal</div>
<div class="t" style="left:795.500px;top:229.900px;color:#111;">Normal</div>
<svg class="a" style="left:0;top:0;" width="1024" height="260" viewBox="0 0 1024 260">
<rect x="664.300" y="108.800" width="6" height="4.800" fill="none" stroke="#f4f4f4" stroke-width="0.800"/><path d="M664.300 109.300h6" stroke="#f4f4f4" stroke-width="1.200"/>
<path d="M936.800 110.600h3M939.800 108.300v4.600M939.800 109h4v3.200h-4" fill="none" stroke="#f4f4f4" stroke-width="0.800"/>
<path d="M951.600 108l5 5M956.600 108l-5 5" stroke="#fff" stroke-width="1.200"/>
<rect x="873.500" y="116.500" width="0.700" height="40" fill="#d4d4d4"/>
<g transform="translate(666.3 118) scale(1)"><path d="M1 0v17.200M17.200 0v17.200" stroke="#3c4a60" stroke-width="0.900"/><path d="M1.800 5.400h14.600" stroke="#3aa0e0" stroke-width="0.700"/><circle cx="3.300" cy="5.400" r="1" fill="#fff" stroke="#3aa0e0" stroke-width="0.500"/><circle cx="14.900" cy="5.400" r="1" fill="#fff" stroke="#3aa0e0" stroke-width="0.500"/></g>
<g transform="translate(692.2 118) scale(1)"><path d="M1 16L15.800 1.500" stroke="#3c4a60" stroke-width="0.800"/><circle cx="1" cy="16" r="0.9" fill="#3aa0e0"/><circle cx="15.8" cy="1.5" r="0.9" fill="#3aa0e0"/></g>
<g transform="translate(712.5 118) scale(1)"><path d="M1.500 15.800l9.500-8" stroke="#3c4a60" stroke-width="0.800"/><circle cx="1.5" cy="15.8" r="1.2" fill="#3aa0e0"/><text x="9.300" y="7.800" font-family="Liberation Serif, serif" font-weight="bold" font-size="9.500" fill="#14213d">A</text><path d="M9.800 6.300h6.400v2.700H9.800z" fill="none" stroke="#8a92a0" stroke-width="0.400"/></g>
<g transform="translate(733.4 118) scale(1)"><rect x="1.200" y="1.300" width="14.600" height="14.800" fill="#fff" stroke="#3c4a60" stroke-width="0.800"/><text x="8.500" y="13.800" font-family="Liberation Serif, serif" font-weight="bold" font-size="14" fill="#14213d" text-anchor="middle">A</text><circle cx="1.2" cy="1.3" r="0.9" fill="#3aa0e0"/><circle cx="15.8" cy="1.3" r="0.9" fill="#3aa0e0"/><circle cx="1.2" cy="16.1" r="0.9" fill="#3aa0e0"/><circle cx="15.8" cy="16.1" r="0.9" fill="#3aa0e0"/></g>
<g transform="translate(754.2 118) scale(1)"><path d="M1.800 16A9 9 0 0 1 16 3" fill="none" stroke="#3c4a60" stroke-width="0.800"/><circle cx="1.8" cy="16" r="0.9" fill="#3aa0e0"/><circle cx="16" cy="3" r="0.9" fill="#3aa0e0"/></g>
<g transform="translate(774.5 118) scale(1)"><circle cx="9" cy="8.800" r="8.300" fill="#fff" stroke="#3c4a60" stroke-width="0.800"/><path d="M9 8.800l5.500-5.500" stroke="#3c4a60" stroke-width="0.800"/><circle cx="9" cy="8.8" r="0.9" fill="#3aa0e0"/></g>
<g transform="translate(801 118) scale(1)"><rect x="0.500" y="4.700" width="16" height="8.600" fill="#fff" stroke="#5a6478" stroke-width="0.900"/><circle cx="0.5" cy="4.7" r="0.7" fill="#3aa0e0"/><circle cx="16.5" cy="4.7" r="0.7" fill="#3aa0e0"/><circle cx="0.5" cy="13.3" r="0.7" fill="#3aa0e0"/><circle cx="16.5" cy="13.3" r="0.7" fill="#3aa0e0"/></g>
<g transform="translate(827.5 118) scale(1)"><path d="M8 1h8v9h-5v6.500H.8V5.500H8z" fill="#fff" stroke="#5a6478" stroke-width="0.900"/><path d="M8 1h8M16 1v9M.8 5.500V16.500M.8 5.500H8" stroke="#3aa0e0" stroke-width="0.700" fill="none" opacity="0.700"/><circle cx="8" cy="1" r="0.7" fill="#3aa0e0"/><circle cx="16" cy="1" r="0.7" fill="#3aa0e0"/><circle cx="16" cy="10" r="0.7" fill="#3aa0e0"/><circle cx="0.8" cy="5.5" r="0.7" fill="#3aa0e0"/><circle cx="0.8" cy="16.5" r="0.7" fill="#3aa0e0"/><circle cx="11" cy="16.5" r="0.7" fill="#3aa0e0"/></g>
<g transform="translate(851 118) scale(1)"><path d="M1.500 5.500H9V1h7.500v9h-4.800v6.300H6" fill="none" stroke="#5a6478" stroke-width="0.900"/><circle cx="1.5" cy="5.5" r="0.7" fill="#3aa0e0"/><circle cx="9" cy="1" r="0.7" fill="#3aa0e0"/><circle cx="16.5" cy="1" r="0.7" fill="#3aa0e0"/><circle cx="16.5" cy="10" r="0.7" fill="#3aa0e0"/><circle cx="11.7" cy="16.3" r="0.7" fill="#3aa0e0"/><circle cx="6" cy="16.3" r="0.7" fill="#3aa0e0"/></g>
<g transform="translate(877.2 118) scale(1)"><path d="M12.500.8l4 3L6 15.300 1 17l.8-5z" fill="#fff" stroke="#14213d" stroke-width="0.900" stroke-linejoin="round"/><path d="M3 13.300L13.300 2.500M4.600 14.600L14.900 3.800M10.800 2.800l4 3" stroke="#14213d" stroke-width="0.700" fill="none"/><path d="M1 17l.5-2.800 2.200 1.800z" fill="#14213d"/></g>
<g transform="translate(898.3 118) scale(1)"><path d="M10.500 1l6.300 4.800-7.500 9.500H3.800L1 12.800z" fill="#fff" stroke="#14213d" stroke-width="0.900" stroke-linejoin="round"/><path d="M10.500 1l6.300 4.800-4 5L6.500 6z" fill="#14213d"/></g>
<g transform="translate(919.4 118) scale(1)"><g transform="translate(3.200 -0.300) scale(0.650)"><path d="M8.300 0l3.200 4.600H9.400v2.700h2.700V5.100l4.600 3.200-4.600 3.200V9.400H9.400v2.700h2.100l-3.200 4.600-3.200-4.600h2.100V9.400H4.500v2.100L-.1 8.300l4.600-3.200v2.200h2.700V4.600H5.100z" fill="#14213d"/></g><path d="M0 14.800h17.200" stroke="#3c4a60" stroke-width="0.900"/><circle cx="8.600" cy="14.800" r="1.300" fill="#fff" stroke="#3c4a60" stroke-width="0.700"/></g>
<g transform="translate(940.5 118) scale(1)"><path d="M9.500.5l7.200 6-4.500 5.200-7-6z" fill="#fff" stroke="#14213d" stroke-width="0.900" stroke-linejoin="round"/><path d="M11.500 2.500l-2.500 3M13.800 4.300l-2.500 3" stroke="#14213d" stroke-width="0.700"/><path d="M5.200 5.700l7 6-1.500 1.500-2.500-.5-3.500 3.800-2.500-2 3.700-3.700-.7-2.400z" fill="#14213d"/><circle cx="2.800" cy="15.200" r="2" fill="#fff" stroke="#14213d" stroke-width="0.700"/><circle cx="2.800" cy="15.200" r="0.700" fill="#14213d"/></g>
<path d="M714 196.300h8.300v7.500H714zM716.700 196.300v7.500M716.700 200.300h5.600" fill="none" stroke="#333" stroke-width="0.900"/><rect x="714.400" y="196.700" width="2" height="6.700" fill="#d0d0d0"/>
<rect x="805.200" y="197.600" width="4.400" height="4.600" fill="none" stroke="#222" stroke-width="0.700"/>
<path d="M830.800 197.600l4.600 4.600M835.400 197.600l-4.600 4.600" stroke="#222" stroke-width="0.800"/>
<path d="M782.400 232.200l1.800 1.800 1.800-1.800M832.900 232.200l1.800 1.800 1.800-1.800" fill="none" stroke="#444" stroke-width="0.600"/>
</svg>
<!-- status bar -->
<div class="a" id="status" style="left:0;top:545px;width:1024px;height:10px;background:#f0f0f0;"></div>
<svg class="a" style="left:0;top:540px;" width="1024" height="15" viewBox="0 540 1024 15">
<circle cx="8.400" cy="550" r="3.700" fill="#1478d0"/><path d="M8.400 549.300v2.700" stroke="#fff" stroke-width="1"/><circle cx="8.400" cy="548" r="0.650" fill="#fff"/><path d="M7.500 552h1.900M7.600 549.400h.8" stroke="#fff" stroke-width="0.500"/>
<rect x="934" y="545.900" width="8.300" height="8.500" fill="#8fd0ea"/><rect x="935.200" y="548.300" width="6" height="4.400" fill="#f4a8a0"/><rect x="935.200" y="548.300" width="6" height="1.100" fill="#e87068"/><rect x="934" y="553.300" width="8.300" height="1.700" fill="#9a6a40"/>
<path d="M929.600 546.500v7.500M1014.800 546.500v7.500" stroke="#e0e0e0" stroke-width="0.600"/>
</svg>
<div class="t" style="left:17.300px;top:546.900px;color:#111;">Annotations - Elevation</div>
<div class="a" style="left:87px;top:548.800px;width:2.600px;height:2.600px;border-radius:50%;background:#111;"></div>
<div class="t" style="left:93.400px;top:546.900px;color:#111;">Insert a point.</div>
<div class="t" style="left:947px;top:546.900px;color:#111;">Floor 3</div>
</body></html>
